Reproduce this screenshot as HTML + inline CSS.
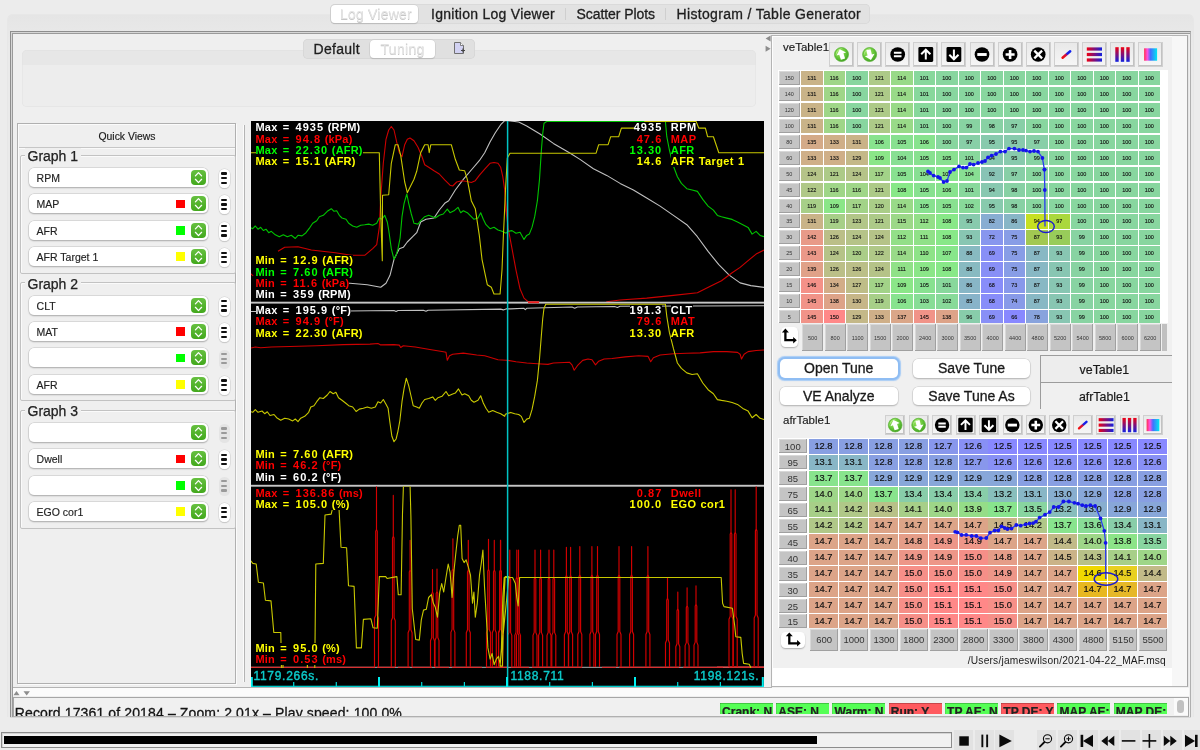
<!DOCTYPE html><html><head><meta charset="utf-8"><title>Log Viewer</title><style>

html,body{margin:0;padding:0}
body{width:1200px;height:750px;overflow:hidden;background:#ececec;font-family:"Liberation Sans",sans-serif;position:relative;color:#222}
.a{position:absolute}
.t{position:absolute;white-space:nowrap;line-height:1}
.gl{position:absolute;white-space:nowrap;font-weight:bold;font-size:11px;line-height:11px;background:#000;letter-spacing:.36px;word-spacing:2px}
.gl i{font-style:normal;letter-spacing:1.05px;margin-left:1px;margin-right:-1.7px}
.combo{position:absolute;left:29px;width:179px;height:19px;background:#fff;border-radius:5px;box-shadow:0 0 0 0.5px #c4c4c4,0 1px 1.5px rgba(0,0,0,.35)}
.combo span{-webkit-text-stroke:.15px #222;position:absolute;left:7.6px;top:4.2px;font-size:10.5px;line-height:12px;color:#222}
.gb{position:absolute;left:162px;top:2px;width:15.2px;height:15.2px;border-radius:4px;background:linear-gradient(#66c040,#42a81c)}
.sw{position:absolute;left:147.2px;top:5.5px;width:8.7px;height:8.5px}
.hd{position:absolute;left:219px;width:10.5px;height:19px;background:#fff;border-radius:5.2px;box-shadow:0 0 0 0.5px #d0d0d0,0 1px 1px rgba(0,0,0,.2)}
.hd i{position:absolute;left:2.1px;width:6.3px;height:2.2px;background:#111;border-radius:1.1px}
.hd.dis{background:#e4e4e4;box-shadow:none}
.hd.dis i{background:#9a9a9a}
.grp{position:absolute;left:20px;width:214px;border:1px solid #c2c2c2;border-radius:2px;box-shadow:inset 1px 1px 0 #fafafa}
.grp b{-webkit-text-stroke:.25px #222;position:absolute;left:3.5px;top:-7.5px;background:#efefef;padding:0 3px;font-weight:normal;font-size:14px;line-height:16px;color:#222}
.cell{position:absolute;text-align:center;color:#111}
.hc{position:absolute;text-align:center;color:#333;background:#c4c4c4;box-shadow:inset -1px -1px 0 #a0a0a0, inset 1px 1px 0 #d8d8d8}
.tb{position:absolute;background:linear-gradient(#e8e8e8,#f7f7f7);box-shadow:inset 0 0 0 1px #d0d0d0, inset -1px -1px 0 1px #c2c2c2}
.btn{position:absolute;background:#fff;border-radius:5px;box-shadow:0 0 0 0.5px #c8c8c8,0 1px 1.5px rgba(0,0,0,.3);text-align:center;font-size:14px;color:#1a1a1a;-webkit-text-stroke:.3px #1a1a1a}
.st{position:absolute;top:703.2px;height:11.3px;width:53px;font-weight:bold;font-size:12px;line-height:15px;-webkit-text-stroke:.25px #222;color:#222;overflow:hidden;white-space:nowrap}
.st span{position:absolute;left:2.3px;top:1.6px}

</style></head><body><div id="root" style="position:absolute;left:0;top:0;width:1200px;height:750px;will-change:transform">
<div class="a" style="left:8px;top:15px;width:1185px;height:706px;border-radius:4px 4px 0 0;background:linear-gradient(#e5e5e5,#eaeaea 30px);box-shadow:0 0 0 0.5px #e2e2e2"></div>
<div class="a" style="left:330px;top:4px;width:540px;height:20px;border-radius:5px;background:#e2e2e2;box-shadow:inset 0 0 0 0.5px #d2d2d2"></div>
<div class="a" style="left:331px;top:5px;width:87px;height:18px;border-radius:4px;background:#fff;box-shadow:0 0 0 0.5px #c8c8c8,0 1px 1px rgba(0,0,0,.2)"></div>
<div class="t" id="tlv" style="left:340px;top:7px;font-size:14px;color:#e4e4e4;text-shadow:0 1px 0 #c6c6c6;letter-spacing:.2px">Log Viewer</div>
<div class="t" id="tilv" style="-webkit-text-stroke:.3px #1e1e1e;left:431px;top:7px;font-size:14px;color:#1e1e1e;letter-spacing:.27px">Ignition Log Viewer</div>
<div class="t" id="tsp" style="-webkit-text-stroke:.3px #1e1e1e;left:576.5px;top:7px;font-size:14px;color:#1e1e1e;letter-spacing:-.07px">Scatter Plots</div>
<div class="t" id="thg" style="-webkit-text-stroke:.3px #1e1e1e;left:676.5px;top:7px;font-size:14px;color:#1e1e1e;letter-spacing:.33px">Histogram / Table Generator</div>
<div class="a" style="left:565px;top:8px;width:1px;height:12px;background:#cfcfcf"></div>
<div class="a" style="left:665px;top:8px;width:1px;height:12px;background:#cfcfcf"></div>
<div class="a" style="left:10px;top:31px;width:1179.2px;height:690px;border:1px solid #8e8e8e;border-bottom:none;border-right:1.6px solid #b0b0b0;box-shadow:inset 1px 1px 0 #d6d6d6, inset 2px 2px 0 #9a9a9a;background:#efefef"></div>
<div class="a" style="left:22px;top:50px;width:734px;height:57px;border-radius:5px;background:linear-gradient(#e7e7e7 0,#e7e7e7 15px,#ededed 15px);box-shadow:inset 0 0 0 0.5px #e0e0e0"></div>
<div class="a" style="left:303px;top:38.5px;width:172px;height:20px;border-radius:5px;background:#e0e0e0;box-shadow:inset 0 0 0 0.5px #d0d0d0"></div>
<div class="a" style="left:370px;top:39.5px;width:65px;height:18px;border-radius:4px;background:#fff;box-shadow:0 0 0 0.5px #c8c8c8,0 1px 1px rgba(0,0,0,.2)"></div>
<div class="t" id="tdef" style="-webkit-text-stroke:.3px #1e1e1e;left:313.5px;top:41.5px;font-size:14px;color:#1e1e1e;letter-spacing:.3px">Default</div>
<div class="t" id="ttun" style="left:380.5px;top:41.5px;font-size:14px;color:#e4e4e4;text-shadow:0 1px 0 #c6c6c6;letter-spacing:.3px">Tuning</div>
<svg class="a" style="left:452px;top:41px" width="14" height="14" viewBox="0 0 14 14"><path d="M2.5 1.5h6l3 3v8h-9z" fill="#d2d2f2" stroke="#707070" stroke-width="1"/><path d="M8.5 1.5v3h3" fill="#fff" stroke="#666" stroke-width=".8"/><path d="M9 9.5h4M11 7.5v4" stroke="#444" stroke-width="1.2"/></svg>
<div class="a" style="left:17px;top:123px;width:217px;height:559px;border:1px solid #b0b0b0;box-shadow:inset 1px 1px 0 #fbfbfb,1px 1px 0 #fbfbfb;background:#efefef"></div>
<div class="t" id="tqv" style="-webkit-text-stroke:.15px #1a1a1a;left:98.5px;top:131.7px;font-size:10.4px;color:#1a1a1a">Quick Views</div>
<div class="a" style="left:19px;top:147px;width:216px;height:1px;background:#c6c6c6"></div>
<div class="a" style="left:19px;top:148px;width:216px;height:1px;background:#fafafa"></div>
<div class="grp" style="top:154.5px;height:117px"><b>Graph 1</b></div>
<div class="combo" style="top:167.7px"><span>RPM</span><div class="gb"><svg width="15" height="15" viewBox="0.5 0.5 15 15" style="display:block"><path d="M4.9 6.4 8 3.1l3.1 3.3M4.9 9.8l3.1 3.3 3.1-3.3" fill="none" stroke="#fff" stroke-width="1.25" stroke-linecap="round" stroke-linejoin="round"/></svg></div></div>
<div class="hd" style="top:168.9px"><i style="top:3.5px"></i><i style="top:8.1px"></i><i style="top:12.7px"></i></div>
<div class="combo" style="top:194.1px"><span>MAP</span><div class="sw" style="background:#ff0000"></div><div class="gb"><svg width="15" height="15" viewBox="0.5 0.5 15 15" style="display:block"><path d="M4.9 6.4 8 3.1l3.1 3.3M4.9 9.8l3.1 3.3 3.1-3.3" fill="none" stroke="#fff" stroke-width="1.25" stroke-linecap="round" stroke-linejoin="round"/></svg></div></div>
<div class="hd" style="top:195.3px"><i style="top:3.5px"></i><i style="top:8.1px"></i><i style="top:12.7px"></i></div>
<div class="combo" style="top:220.5px"><span>AFR</span><div class="sw" style="background:#00ff00"></div><div class="gb"><svg width="15" height="15" viewBox="0.5 0.5 15 15" style="display:block"><path d="M4.9 6.4 8 3.1l3.1 3.3M4.9 9.8l3.1 3.3 3.1-3.3" fill="none" stroke="#fff" stroke-width="1.25" stroke-linecap="round" stroke-linejoin="round"/></svg></div></div>
<div class="hd" style="top:221.7px"><i style="top:3.5px"></i><i style="top:8.1px"></i><i style="top:12.7px"></i></div>
<div class="combo" style="top:246.9px"><span>AFR Target 1</span><div class="sw" style="background:#ffff00"></div><div class="gb"><svg width="15" height="15" viewBox="0.5 0.5 15 15" style="display:block"><path d="M4.9 6.4 8 3.1l3.1 3.3M4.9 9.8l3.1 3.3 3.1-3.3" fill="none" stroke="#fff" stroke-width="1.25" stroke-linecap="round" stroke-linejoin="round"/></svg></div></div>
<div class="hd" style="top:248.1px"><i style="top:3.5px"></i><i style="top:8.1px"></i><i style="top:12.7px"></i></div>
<div class="grp" style="top:282.3px;height:117px"><b>Graph 2</b></div>
<div class="combo" style="top:295.5px"><span>CLT</span><div class="gb"><svg width="15" height="15" viewBox="0.5 0.5 15 15" style="display:block"><path d="M4.9 6.4 8 3.1l3.1 3.3M4.9 9.8l3.1 3.3 3.1-3.3" fill="none" stroke="#fff" stroke-width="1.25" stroke-linecap="round" stroke-linejoin="round"/></svg></div></div>
<div class="hd" style="top:296.7px"><i style="top:3.5px"></i><i style="top:8.1px"></i><i style="top:12.7px"></i></div>
<div class="combo" style="top:321.9px"><span>MAT</span><div class="sw" style="background:#ff0000"></div><div class="gb"><svg width="15" height="15" viewBox="0.5 0.5 15 15" style="display:block"><path d="M4.9 6.4 8 3.1l3.1 3.3M4.9 9.8l3.1 3.3 3.1-3.3" fill="none" stroke="#fff" stroke-width="1.25" stroke-linecap="round" stroke-linejoin="round"/></svg></div></div>
<div class="hd" style="top:323.1px"><i style="top:3.5px"></i><i style="top:8.1px"></i><i style="top:12.7px"></i></div>
<div class="combo" style="top:348.3px"><span></span><div class="sw" style="background:#00ff00"></div><div class="gb"><svg width="15" height="15" viewBox="0.5 0.5 15 15" style="display:block"><path d="M4.9 6.4 8 3.1l3.1 3.3M4.9 9.8l3.1 3.3 3.1-3.3" fill="none" stroke="#fff" stroke-width="1.25" stroke-linecap="round" stroke-linejoin="round"/></svg></div></div>
<div class="hd dis" style="top:349.5px"><i style="top:3.5px"></i><i style="top:8.1px"></i><i style="top:12.7px"></i></div>
<div class="combo" style="top:374.7px"><span>AFR</span><div class="sw" style="background:#ffff00"></div><div class="gb"><svg width="15" height="15" viewBox="0.5 0.5 15 15" style="display:block"><path d="M4.9 6.4 8 3.1l3.1 3.3M4.9 9.8l3.1 3.3 3.1-3.3" fill="none" stroke="#fff" stroke-width="1.25" stroke-linecap="round" stroke-linejoin="round"/></svg></div></div>
<div class="hd" style="top:375.9px"><i style="top:3.5px"></i><i style="top:8.1px"></i><i style="top:12.7px"></i></div>
<div class="grp" style="top:409.5px;height:117px"><b>Graph 3</b></div>
<div class="combo" style="top:422.7px"><span></span><div class="gb"><svg width="15" height="15" viewBox="0.5 0.5 15 15" style="display:block"><path d="M4.9 6.4 8 3.1l3.1 3.3M4.9 9.8l3.1 3.3 3.1-3.3" fill="none" stroke="#fff" stroke-width="1.25" stroke-linecap="round" stroke-linejoin="round"/></svg></div></div>
<div class="hd dis" style="top:423.9px"><i style="top:3.5px"></i><i style="top:8.1px"></i><i style="top:12.7px"></i></div>
<div class="combo" style="top:449.1px"><span>Dwell</span><div class="sw" style="background:#ff0000"></div><div class="gb"><svg width="15" height="15" viewBox="0.5 0.5 15 15" style="display:block"><path d="M4.9 6.4 8 3.1l3.1 3.3M4.9 9.8l3.1 3.3 3.1-3.3" fill="none" stroke="#fff" stroke-width="1.25" stroke-linecap="round" stroke-linejoin="round"/></svg></div></div>
<div class="hd" style="top:450.3px"><i style="top:3.5px"></i><i style="top:8.1px"></i><i style="top:12.7px"></i></div>
<div class="combo" style="top:475.5px"><span></span><div class="sw" style="background:#00ff00"></div><div class="gb"><svg width="15" height="15" viewBox="0.5 0.5 15 15" style="display:block"><path d="M4.9 6.4 8 3.1l3.1 3.3M4.9 9.8l3.1 3.3 3.1-3.3" fill="none" stroke="#fff" stroke-width="1.25" stroke-linecap="round" stroke-linejoin="round"/></svg></div></div>
<div class="hd dis" style="top:476.7px"><i style="top:3.5px"></i><i style="top:8.1px"></i><i style="top:12.7px"></i></div>
<div class="combo" style="top:501.9px"><span>EGO cor1</span><div class="sw" style="background:#ffff00"></div><div class="gb"><svg width="15" height="15" viewBox="0.5 0.5 15 15" style="display:block"><path d="M4.9 6.4 8 3.1l3.1 3.3M4.9 9.8l3.1 3.3 3.1-3.3" fill="none" stroke="#fff" stroke-width="1.25" stroke-linecap="round" stroke-linejoin="round"/></svg></div></div>
<div class="hd" style="top:503.1px"><i style="top:3.5px"></i><i style="top:8.1px"></i><i style="top:12.7px"></i></div>
<div class="a" style="left:243px;top:125px;width:1px;height:557px;background:#fbfbfb"></div>
<div class="a" style="left:244px;top:125px;width:1px;height:557px;background:#b4b4b4"></div>
<div class="a" id="graph" style="left:251px;top:120.8px;width:512.8px;height:566.4px;background:#000;overflow:hidden">
<svg class="a" style="left:0;top:0.2px" width="513" height="566" viewBox="251 121 513 566" fill="none" stroke-linejoin="round" stroke-linecap="butt">
<clipPath id="c1"><rect x="251" y="121" width="513" height="181.5"/></clipPath><clipPath id="c2"><rect x="251" y="303.5" width="513" height="181.5"/></clipPath><clipPath id="c3"><rect x="251" y="486.5" width="513" height="181.5"/></clipPath>
<g clip-path="url(#c1)">
<polyline points="258.0,280.9 350.0,283.3 367.3,284.7 380.7,287.3 386.0,283.3 390.0,275.3 394.0,259.3 399.3,248.7 403.3,247.3 407.3,242.0 412.7,236.7 416.7,232.7 420.7,222.0 426.0,219.3 434.0,218.0 439.3,210.0 444.7,203.3 448.7,200.7 455.3,190.0 463.3,179.3 471.3,170.0 479.3,160.7 484.7,152.7 490.0,142.0 495.3,132.7 500.7,124.7 504.7,120.7 508.0,120.7 518.7,122.0 526.7,126.0 540.0,134.0 553.4,143.4 569.4,152.7 580.0,159.4 593.4,168.7 606.7,175.4 620.1,183.4 633.4,190.0 646.7,198.0 660.1,206.1 673.4,215.4 686.8,224.7 697.4,236.7 708.1,251.4 718.8,264.7 729.5,275.4 740.1,282.9 750.8,285.6 764.1,287.4" stroke="#c0c0c0" stroke-width="1.1" />
<polyline points="250.0,273.2 253.2,275.9" stroke="#cc0000" stroke-width="1.1" />
<polyline points="278.0,251.3 284.7,247.3 298.0,246.8 311.3,250.0 335.3,252.7 351.3,255.3 364.7,255.3 372.7,248.7 376.7,244.7 379.3,227.3 380.7,198.0 383.3,163.3 386.0,139.3 388.7,130.0 391.3,126.5 394.0,130.0 396.7,142.0 399.3,152.7 402.0,156.7 404.7,144.7 407.3,139.3 410.0,138.0 414.0,140.7 418.0,147.3 422.0,156.7 424.7,164.7 428.7,167.3 434.0,170.8 439.3,174.0 444.7,179.9 450.0,185.2 452.7,186.0 456.7,182.0 462.0,180.7 467.3,181.5 471.3,182.5 475.3,180.7 479.3,175.3 484.7,169.2 490.0,163.3 494.0,162.5 498.0,163.3 500.7,167.3 502.8,176.7 504.7,190.0 506.0,211.3 508.1,227.3 505.3,198.0 508.0,227.4 512.0,248.7 516.0,270.1 520.0,288.8 524.0,298.1 528.0,301.6 538.7,301.6 539.0,304.8 606.5,304.8 606.7,301.8 620.1,300.0 646.7,298.1 673.4,295.4 697.4,292.8 710.8,286.1 721.5,280.8 732.1,272.8 740.1,267.4 748.1,260.7 756.1,254.1 764.1,250.1" stroke="#cc0000" stroke-width="1.1" />
<polyline points="250.0,227.3 252.7,228.7 255.3,226.0 258.0,229.2 260.7,227.3 263.3,230.5 266.0,229.2 268.7,232.7 271.3,231.3 275.3,234.8 279.3,236.7 283.3,234.8 287.3,236.7 291.3,235.3 295.3,238.5 298.0,235.3 302.0,235.9 306.0,232.7 310.0,227.3 312.7,223.3 316.7,220.7 319.3,216.7 323.3,215.3 327.3,211.3 331.3,208.7 334.0,211.3 336.7,210.8 339.3,215.3 342.0,218.0 346.0,219.3 348.7,223.3 352.7,226.0 356.7,227.3 360.7,225.2 364.7,224.7 368.7,224.1 372.7,225.2 376.7,223.3 379.3,218.0 382.0,219.3 384.7,215.3 387.3,222.0 388.7,230.0 391.3,248.7 394.0,259.3 396.1,255.3 398.0,248.7 400.1,238.0 402.0,216.7 404.1,203.3 406.8,194.0 408.7,203.3 411.3,214.0 414.0,223.3 418.0,224.1 420.7,220.7 424.7,216.7 428.7,215.3 432.7,216.7 435.3,218.0 439.3,215.3 443.3,214.0 447.3,209.2 450.0,212.7 454.0,210.8 458.0,207.3 460.7,212.7 463.3,210.8 467.3,212.7 471.3,216.7 474.0,219.3 478.0,218.0 480.7,212.7 483.3,219.3 486.0,224.7 490.0,228.7 494.0,227.3 498.0,230.0 502.0,231.3 506.0,233.2 508.0,231.4 512.0,230.6 516.0,233.3 520.0,232.2 524.0,239.4 526.7,235.4 529.3,234.1 532.0,227.4 534.7,216.7 537.4,200.7 539.5,179.4 541.4,150.0 542.7,134.0 544.0,123.3 546.7,121.5 665.4,121.5 666.8,136.7 669.4,150.0 673.4,166.0 677.4,176.7 681.4,183.4 686.8,188.7 692.1,190.0 697.4,191.4 702.8,199.4 708.1,206.1 713.4,210.1 717.4,215.4 721.5,216.7 726.8,218.1 732.1,219.4 737.5,222.1 742.8,224.7 748.1,227.4 752.1,234.1 756.1,231.4 760.1,235.4 764.1,236.7" stroke="#00c400" stroke-width="1.1" />
<polyline points="250.0,152.7 379.3,152.7 380.4,200.7 381.5,238.0 382.3,260.7 382.5,195.3 388.7,194.8 391.3,163.3 395.3,144.7 398.0,144.7 400.7,155.3 404.7,182.0 407.3,192.7 410.0,187.3 414.0,179.3 416.7,171.3 420.7,152.7 424.7,144.7 428.1,144.7 429.2,152.7 430.8,144.7 451.3,144.7 455.3,159.3 459.3,170.0 464.7,170.8 467.3,179.3 471.3,200.7 475.3,208.7 479.3,235.3 482.0,259.3 487.3,284.7 491.3,287.3 494.0,294.0 500.1,294.0 502.0,270.0 503.3,238.0 505.5,190.0 507.3,158.0 510.0,153.2 510.7,153.2 596.1,153.2 598.7,144.7 608.1,144.7 610.7,136.7 618.7,136.7 621.4,128.1 643.0,128.1 644.9,121.5 696.1,121.5 698.8,128.1 705.4,128.1 707.6,136.7 713.4,136.7 716.1,144.7 718.8,152.7 764.1,152.7" stroke="#c8c800" stroke-width="1.1" />
</g>
<rect x="251" y="301.7" width="513" height="1.9" fill="#c6c6c6" stroke="none"/>
<line x1="528" y1="302.5" x2="539" y2="302.5" stroke="#ee2020" stroke-width="1.4"/>
<g clip-path="url(#c2)">
<polyline points="250.0,311.5 347.3,311.0 394.0,310.5 396.1,311.5 398.0,310.5 423.3,310.2 426.0,311.3 428.1,310.2 500.7,309.1 503.3,309.9 506.0,308.9 510.7,308.9 524.0,308.3 525.3,309.7 526.7,308.3 572.0,307.0 574.7,308.3 577.4,307.0 614.7,306.5 617.4,307.5 620.1,306.2 764.1,305.7" stroke="#c0c0c0" stroke-width="1.1" />
<polyline points="250.0,348.3 255.3,347.0 260.7,347.8 271.3,347.0 290.0,346.5 316.7,345.7 343.3,344.6 370.0,344.1 378.0,343.5 380.7,344.9 394.0,344.6 399.3,345.1 400.7,347.5 403.3,345.7 415.3,347.0 431.3,349.7 442.0,351.5 446.0,352.3 447.3,360.3 449.5,355.8 452.7,354.2 463.3,353.1 476.7,355.0 484.7,355.8 498.0,359.8 506.0,360.3 508.0,360.4 516.0,361.7 526.7,363.0 537.4,363.8 548.0,364.4 553.4,363.0 569.4,362.2 572.0,364.9 574.2,370.2 577.4,365.7 582.7,360.4 588.0,359.0 592.0,359.8 595.5,364.9 598.7,361.2 604.1,359.0 612.1,358.5 625.4,356.9 638.7,355.8 648.1,356.4 650.7,361.7 653.4,357.7 660.1,355.0 673.4,353.7 686.8,353.2 700.1,352.9 713.4,351.6 726.8,351.6 737.5,352.4 740.1,354.2 741.5,359.0 744.1,354.2 748.1,351.6 756.1,350.5 764.1,350.0" stroke="#cc0000" stroke-width="1.1" />
<polyline points="250.0,411.5 252.7,412.3 255.3,409.7 258.0,412.3 262.0,411.0 264.7,413.7 267.3,411.8 270.0,415.5 274.0,414.5 276.7,417.7 280.7,420.3 284.7,418.2 288.7,419.0 292.7,420.9 295.3,419.0 298.0,421.7 300.7,418.2 304.7,416.3 308.7,412.3 310.8,407.0 314.0,405.7 316.7,401.7 319.9,397.7 323.3,398.5 327.3,395.0 330.0,391.5 333.2,393.7 335.9,392.3 338.5,397.7 342.0,400.3 345.5,403.0 348.7,405.7 352.7,407.0 356.1,411.5 359.3,409.1 363.3,408.3 367.3,407.0 371.3,408.3 375.3,407.0 378.0,401.7 380.7,403.0 383.3,399.5 386.0,404.3 388.1,408.3 390.0,423.0 391.9,436.3 394.0,441.7 396.1,439.0 398.0,431.0 399.9,420.3 402.0,401.7 404.1,388.3 406.3,378.2 408.7,385.7 410.8,395.0 413.2,405.7 416.7,407.0 419.3,408.3 422.0,403.0 424.7,399.5 428.7,398.5 432.7,396.9 435.3,400.3 438.0,397.7 442.0,396.3 446.0,391.5 448.7,395.8 452.1,394.2 455.3,393.1 458.5,388.9 462.0,395.0 464.7,393.7 468.7,395.8 471.3,400.3 474.0,402.2 478.0,400.3 480.7,395.8 483.3,403.0 486.0,408.3 488.7,412.3 492.7,410.5 496.7,412.3 500.7,413.7 504.7,416.3 505.3,414.3 510.7,412.4 514.7,413.7 518.7,414.5 521.3,416.4 524.0,422.5 526.7,419.1 529.3,418.3 532.0,409.7 534.7,396.4 537.4,380.4 539.5,359.0 541.4,335.0 542.7,319.0 544.0,308.3 545.9,304.1 665.4,304.1 666.8,316.3 669.4,332.4 673.4,348.4 677.4,363.0 681.4,368.4 686.8,372.9 692.1,374.5 697.4,373.7 702.8,383.0 708.1,389.7 713.4,393.7 717.4,399.6 721.5,400.4 726.8,401.2 732.1,402.5 737.5,404.4 742.8,408.4 748.1,411.1 752.1,417.7 756.1,414.5 760.1,418.3 764.1,419.6" stroke="#c8c800" stroke-width="1.1" />
</g>
<rect x="251" y="484.8" width="513" height="1.9" fill="#c6c6c6" stroke="none"/>
<line x1="251" y1="667.3" x2="764" y2="667.3" stroke="#8c8c8c" stroke-width="1.2"/>
<line x1="717" y1="667.1" x2="764" y2="667.1" stroke="#f04040" stroke-width="1.4"/>
<g clip-path="url(#c3)">
<line x1="251" y1="667.3" x2="764" y2="667.3" stroke="#d83030" stroke-width="1.2" stroke-dasharray="124 2 18 3 12 2 20 3 14 3 30 4 22 3 18 3 50 20 14 3 60 4 40 6 50 3 100"/>
<polyline points="374.5,667.0 374.5,618.2 375.7,615.2 375.7,531.4 376.5,529.4 376.5,486.2 376.5,529.4 377.3,531.4 377.3,615.2 378.5,618.2 378.5,667.0" stroke="#d40000" stroke-width="1.15" />
<polyline points="391.3,667.0 391.3,620.7 392.5,617.7 392.5,538.3 393.3,536.3 393.3,495.4 393.3,536.3 394.1,538.3 394.1,617.7 395.3,620.7 395.3,667.0" stroke="#d40000" stroke-width="1.15" />
<polyline points="408.1,667.0 408.1,632.8 409.3,629.8 409.3,571.9 410.1,569.9 410.1,540.2 410.1,569.9 410.9,571.9 410.9,629.8 412.1,632.8 412.1,667.0" stroke="#d40000" stroke-width="1.15" />
<polyline points="430.5,667.0 430.5,640.7 431.7,637.7 431.7,593.9 432.5,591.9 432.5,569.6 432.5,591.9 433.3,593.9 433.3,637.7 434.5,640.7 434.5,667.0" stroke="#d40000" stroke-width="1.15" />
<polyline points="435.0,667.0 435.0,640.5 436.2,637.5 436.2,593.5 437.0,591.5 437.0,569.0 437.0,591.5 437.8,593.5 437.8,637.5 439.0,640.5 439.0,667.0" stroke="#d40000" stroke-width="1.15" />
<polyline points="450.9,667.0 450.9,632.4 452.1,629.4 452.1,570.8 452.9,568.8 452.9,538.8 452.9,568.8 453.7,570.8 453.7,629.4 454.9,632.4 454.9,667.0" stroke="#d40000" stroke-width="1.15" />
<polyline points="466.3,667.0 466.3,632.8 467.5,629.8 467.5,571.9 468.3,569.9 468.3,540.2 468.3,569.9 469.1,571.9 469.1,629.8 470.3,632.8 470.3,667.0" stroke="#d40000" stroke-width="1.15" />
<polyline points="486.5,667.0 486.5,632.5 487.7,629.5 487.7,571.3 488.5,569.3 488.5,539.3 488.5,569.3 489.3,571.3 489.3,629.5 490.5,632.5 490.5,667.0" stroke="#d40000" stroke-width="1.15" />
<polyline points="492.3,667.0 492.3,632.8 493.5,629.8 493.5,571.9 494.3,569.9 494.3,540.2 494.3,569.9 495.1,571.9 495.1,629.8 496.3,632.8 496.3,667.0" stroke="#d40000" stroke-width="1.15" />
<polyline points="498.5,667.0 498.5,632.8 499.7,629.8 499.7,571.9 500.5,569.9 500.5,540.2 500.5,569.9 501.3,571.9 501.3,629.8 502.5,632.8 502.5,667.0" stroke="#d40000" stroke-width="1.15" />
<polyline points="498.6,667.0 498.6,632.8 499.8,629.8 499.8,571.9 500.6,569.9 500.6,540.2 500.6,569.9 501.4,571.9 501.4,629.8 502.6,632.8 502.6,667.0" stroke="#d40000" stroke-width="1.15" />
<polyline points="507.8,667.0 507.8,635.4 509.0,632.4 509.0,579.3 509.8,577.3 509.8,550.0 509.8,577.3 510.6,579.3 510.6,632.4 511.8,635.4 511.8,667.0" stroke="#d40000" stroke-width="1.15" />
<polyline points="514.8,667.0 514.8,635.4 516.0,632.4 516.0,579.3 516.8,577.3 516.8,550.0 516.8,577.3 517.6,579.3 517.6,632.4 518.8,635.4 518.8,667.0" stroke="#d40000" stroke-width="1.15" />
<polyline points="516.5,667.0 516.5,635.4 517.7,632.4 517.7,579.3 518.5,577.3 518.5,550.0 518.5,577.3 519.3,579.3 519.3,632.4 520.5,635.4 520.5,667.0" stroke="#d40000" stroke-width="1.15" />
<polyline points="533.0,667.0 533.0,635.4 534.2,632.4 534.2,579.3 535.0,577.3 535.0,550.0 535.0,577.3 535.8,579.3 535.8,632.4 537.0,635.4 537.0,667.0" stroke="#d40000" stroke-width="1.15" />
<polyline points="538.6,667.0 538.6,635.4 539.8,632.4 539.8,579.3 540.6,577.3 540.6,550.0 540.6,577.3 541.4,579.3 541.4,632.4 542.6,635.4 542.6,667.0" stroke="#d40000" stroke-width="1.15" />
<polyline points="547.0,667.0 547.0,635.4 548.2,632.4 548.2,579.3 549.0,577.3 549.0,550.0 549.0,577.3 549.8,579.3 549.8,632.4 551.0,635.4 551.0,667.0" stroke="#d40000" stroke-width="1.15" />
<polyline points="551.8,667.0 551.8,635.4 553.0,632.4 553.0,579.3 553.8,577.3 553.8,550.0 553.8,577.3 554.6,579.3 554.6,632.4 555.8,635.4 555.8,667.0" stroke="#d40000" stroke-width="1.15" />
<polyline points="564.4,667.0 564.4,634.7 565.6,631.7 565.6,577.2 566.4,575.2 566.4,547.2 566.4,575.2 567.2,577.2 567.2,631.7 568.4,634.7 568.4,667.0" stroke="#d40000" stroke-width="1.15" />
<polyline points="568.6,667.0 568.6,634.7 569.8,631.7 569.8,577.2 570.6,575.2 570.6,547.2 570.6,575.2 571.4,577.2 571.4,631.7 572.6,634.7 572.6,667.0" stroke="#d40000" stroke-width="1.15" />
<polyline points="577.8,667.0 577.8,634.5 579.0,631.5 579.0,576.7 579.8,574.7 579.8,546.6 579.8,574.7 580.6,576.7 580.6,631.5 581.8,634.5 581.8,667.0" stroke="#d40000" stroke-width="1.15" />
<polyline points="589.9,667.0 589.9,634.5 591.1,631.5 591.1,576.7 591.9,574.7 591.9,546.6 591.9,574.7 592.7,576.7 592.7,631.5 593.9,634.5 593.9,667.0" stroke="#d40000" stroke-width="1.15" />
<polyline points="595.5,667.0 595.5,634.5 596.7,631.5 596.7,576.7 597.5,574.7 597.5,546.6 597.5,574.7 598.3,576.7 598.3,631.5 599.5,634.5 599.5,667.0" stroke="#d40000" stroke-width="1.15" />
<polyline points="617.0,667.0 617.0,634.5 618.2,631.5 618.2,576.7 619.0,574.7 619.0,546.6 619.0,574.7 619.8,576.7 619.8,631.5 621.0,634.5 621.0,667.0" stroke="#d40000" stroke-width="1.15" />
<polyline points="629.6,667.0 629.6,634.5 630.8,631.5 630.8,576.7 631.6,574.7 631.6,546.6 631.6,574.7 632.4,576.7 632.4,631.5 633.6,634.5 633.6,667.0" stroke="#d40000" stroke-width="1.15" />
<polyline points="645.9,667.0 645.9,634.5 647.1,631.5 647.1,576.7 647.9,574.7 647.9,546.6 647.9,574.7 648.7,576.7 648.7,631.5 649.9,634.5 649.9,667.0" stroke="#d40000" stroke-width="1.15" />
<polyline points="665.5,667.0 665.5,643.0 666.7,640.0 666.7,600.3 667.5,598.3 667.5,578.0 667.5,598.3 668.3,600.3 668.3,640.0 669.5,643.0 669.5,667.0" stroke="#d40000" stroke-width="1.15" />
<polyline points="675.8,667.0 675.8,646.8 677.0,643.8 677.0,610.8 677.8,608.8 677.8,592.0 677.8,608.8 678.6,610.8 678.6,643.8 679.8,646.8 679.8,667.0" stroke="#d40000" stroke-width="1.15" />
<polyline points="685.1,667.0 685.1,645.6 686.3,642.6 686.3,607.6 687.1,605.6 687.1,587.8 687.1,605.6 687.9,607.6 687.9,642.6 689.1,645.6 689.1,667.0" stroke="#d40000" stroke-width="1.15" />
<polyline points="694.0,667.0 694.0,645.1 695.2,642.1 695.2,606.1 696.0,604.1 696.0,585.9 696.0,604.1 696.8,606.1 696.8,642.1 698.0,645.1 698.0,667.0" stroke="#d40000" stroke-width="1.15" />
<polyline points="729.0,667.0 729.0,619.2 730.2,616.2 730.2,534.1 731.0,532.1 731.0,489.8 731.0,532.1 731.8,534.1 731.8,616.2 733.0,619.2 733.0,667.0" stroke="#d40000" stroke-width="1.15" />
<polyline points="733.2,667.0 733.2,619.2 734.4,616.2 734.4,534.1 735.2,532.1 735.2,489.8 735.2,532.1 736.0,534.1 736.0,616.2 737.2,619.2 737.2,667.0" stroke="#d40000" stroke-width="1.15" />
<polyline points="754.2,667.0 754.2,618.0 755.4,615.0 755.4,531.0 756.2,529.0 756.2,485.6 756.2,529.0 757.0,531.0 757.0,615.0 758.2,618.0 758.2,667.0" stroke="#d40000" stroke-width="1.15" />
<polyline points="250.0,559.8 252.8,563.4 256.2,564.0 258.4,582.2 263.4,583.0 265.4,600.3 271.0,600.9 273.8,632.5 280.8,632.5 281.6,675.9 314.7,675.9 315.8,564.0 323.3,563.4 325.0,515.0 331.2,514.1 332.6,508.0 339.0,508.0 341.0,547.2 346.6,547.7 348.5,585.8 354.1,586.4 356.4,647.9 361.4,647.9 363.4,619.4 370.9,618.8 373.1,627.8 377.3,628.3 379.3,576.6 385.7,576.6 387.1,578.5 392.7,577.4 396.9,576.6 398.3,594.7 401.1,594.7 402.5,513.6 403.4,486.2 410.1,486.2 410.9,516.4 412.3,608.7 415.7,639.5 419.3,640.1 421.3,619.9 423.5,610.1 426.3,609.3 428.6,597.5 431.4,594.7 433.3,603.1 435.3,607.3 437.5,617.1 439.8,592.0 441.7,583.6 443.7,592.0 445.9,578.0 448.2,564.0 450.1,572.4 452.1,597.5 453.8,572.4 455.7,554.2 457.7,536.0 459.3,525.3 460.7,525.3 462.1,558.4 464.1,562.6 466.1,559.8 468.3,566.8 470.5,575.2 472.5,603.1 473.9,592.0 475.3,617.1 477.3,603.1 479.5,575.2 481.2,564.0 482.9,550.0 484.5,586.4 486.5,619.9 487.9,647.9 490.1,659.1 492.1,653.5 494.1,664.7 496.3,659.1 498.5,656.3 500.5,666.1 502.4,666.1 504.1,597.5 505.2,576.6 508.9,576.6 500.0,666.2 501.4,648.0 502.8,597.6 504.2,577.5 512.6,577.5 515.4,583.6 516.8,597.6 518.2,606.0 519.6,577.5 721.2,577.5 722.6,603.2 724.0,606.6 732.4,608.3 734.7,625.6 735.8,636.8 740.8,637.4 742.2,653.6 743.6,663.4 749.2,664.3 750.6,667.1 751.2,676.0" stroke="#c8c800" stroke-width="1.1" />
<path d="M283 664v4M307.4 664v4" stroke="#d0c000" stroke-width="1.2"/>
</g>
<line x1="507.6" y1="121" x2="507.6" y2="687" stroke="#00c4c4" stroke-width="1.5"/>
<rect x="251" y="685.7" width="513" height="1.6" fill="#00c8c8" stroke="none"/>
<line x1="251.8" y1="677" x2="251.8" y2="687" stroke="#00f0f0" stroke-width="2"/>
<line x1="293.7" y1="682" x2="293.7" y2="687" stroke="#00d8d8" stroke-width="1.2"/>
<line x1="336.3" y1="682" x2="336.3" y2="687" stroke="#00d8d8" stroke-width="1.2"/>
<line x1="379.0" y1="677" x2="379.0" y2="687" stroke="#00f0f0" stroke-width="2"/>
<line x1="421.7" y1="682" x2="421.7" y2="687" stroke="#00d8d8" stroke-width="1.2"/>
<line x1="464.4" y1="682" x2="464.4" y2="687" stroke="#00d8d8" stroke-width="1.2"/>
<line x1="507.0" y1="677" x2="507.0" y2="687" stroke="#00f0f0" stroke-width="2"/>
<line x1="549.7" y1="682" x2="549.7" y2="687" stroke="#00d8d8" stroke-width="1.2"/>
<line x1="592.4" y1="682" x2="592.4" y2="687" stroke="#00d8d8" stroke-width="1.2"/>
<line x1="635.0" y1="677" x2="635.0" y2="687" stroke="#00f0f0" stroke-width="2"/>
<line x1="677.7" y1="682" x2="677.7" y2="687" stroke="#00d8d8" stroke-width="1.2"/>
<line x1="720.4" y1="682" x2="720.4" y2="687" stroke="#00d8d8" stroke-width="1.2"/>
<line x1="762.8" y1="677" x2="762.8" y2="687" stroke="#00f0f0" stroke-width="2"/>
</svg>
<div class="gl" id="gl1" style="left:4.5px;top:1.6px;color:#ffffff;letter-spacing:.18px">Max = <i>4935</i> (RPM)</div>
<div class="gl" style="left:4.5px;top:12.9px;color:#ff0000;letter-spacing:.18px">Max = <i>94.8</i> (kPa)</div>
<div class="gl" style="left:4.5px;top:24.2px;color:#00ff00;letter-spacing:.18px">Max = <i>22.30</i> (AFR)</div>
<div class="gl" style="left:4.5px;top:35.6px;color:#ffff00;letter-spacing:.18px">Max = <i>15.1</i> (AFR)</div>
<div class="gl" style="left:4.5px;top:134.6px;color:#ffff00;letter-spacing:.18px">Min = <i>12.9</i> (AFR)</div>
<div class="gl" style="left:4.5px;top:145.9px;color:#00ff00;letter-spacing:.18px">Min = <i>7.60</i> (AFR)</div>
<div class="gl" style="left:4.5px;top:156.9px;color:#ff0000;letter-spacing:.18px">Min = <i>11.6</i> (kPa)</div>
<div class="gl" style="left:4.5px;top:168.1px;color:#ffffff;letter-spacing:.18px">Min = <i>359</i> (RPM)</div>
<div class="gl" style="right:101.5px;top:1.6px;color:#ffffff;letter-spacing:1.05px">4935</div>
<div class="gl" style="left:419.8px;top:1.6px;color:#ffffff;word-spacing:.6px;letter-spacing:.4px">RPM</div>
<div class="gl" style="right:101.5px;top:12.9px;color:#ff0000;letter-spacing:1.05px">47.6</div>
<div class="gl" style="left:419.8px;top:12.9px;color:#ff0000;word-spacing:.6px;letter-spacing:.4px">MAP</div>
<div class="gl" style="right:101.5px;top:24.2px;color:#00ff00;letter-spacing:1.05px">13.30</div>
<div class="gl" style="left:419.8px;top:24.2px;color:#00ff00;word-spacing:.6px;letter-spacing:.4px">AFR</div>
<div class="gl" style="right:101.5px;top:35.6px;color:#ffff00;letter-spacing:1.05px">14.6</div>
<div class="gl" id="gl2" style="left:419.8px;top:35.6px;color:#ffff00;word-spacing:.6px;letter-spacing:.4px">AFR Target 1</div>
<div class="gl" style="left:4.5px;top:184.3px;color:#ffffff;letter-spacing:.18px">Max = <i>195.9</i> (°F)</div>
<div class="gl" style="left:4.5px;top:195.6px;color:#ff0000;letter-spacing:.18px">Max = <i>94.9</i> (°F)</div>
<div class="gl" style="left:4.5px;top:206.9px;color:#ffff00;letter-spacing:.18px">Max = <i>22.30</i> (AFR)</div>
<div class="gl" style="left:4.5px;top:328.3px;color:#ffff00;letter-spacing:.18px">Min = <i>7.60</i> (AFR)</div>
<div class="gl" style="left:4.5px;top:339.6px;color:#ff0000;letter-spacing:.18px">Min = <i>46.2</i> (°F)</div>
<div class="gl" style="left:4.5px;top:351.1px;color:#ffffff;letter-spacing:.18px">Min = <i>60.2</i> (°F)</div>
<div class="gl" style="right:101.5px;top:184.3px;color:#ffffff;letter-spacing:1.05px">191.3</div>
<div class="gl" style="left:419.8px;top:184.3px;color:#ffffff;word-spacing:.6px;letter-spacing:.4px">CLT</div>
<div class="gl" style="right:101.5px;top:195.6px;color:#ff0000;letter-spacing:1.05px">79.6</div>
<div class="gl" style="left:419.8px;top:195.6px;color:#ff0000;word-spacing:.6px;letter-spacing:.4px">MAT</div>
<div class="gl" style="right:101.5px;top:206.9px;color:#ffff00;letter-spacing:1.05px">13.30</div>
<div class="gl" style="left:419.8px;top:206.9px;color:#ffff00;word-spacing:.6px;letter-spacing:.4px">AFR</div>
<div class="gl" style="left:4.5px;top:367.0px;color:#ff0000;letter-spacing:.18px">Max = <i>136.86</i> (ms)</div>
<div class="gl" style="left:4.5px;top:378.6px;color:#ffff00;letter-spacing:.18px">Max = <i>105.0</i> (%)</div>
<div class="gl" style="left:4.5px;top:521.9px;color:#ffff00;letter-spacing:.18px">Min = <i>95.0</i> (%)</div>
<div class="gl" style="left:4.5px;top:533.1px;color:#ff0000;letter-spacing:.18px">Min = <i>0.53</i> (ms)</div>
<div class="gl" style="right:101.5px;top:367.0px;color:#ff0000;letter-spacing:1.05px">0.87</div>
<div class="gl" style="left:419.8px;top:367.0px;color:#ff0000;word-spacing:.6px;letter-spacing:.4px">Dwell</div>
<div class="gl" style="right:101.5px;top:378.6px;color:#ffff00;letter-spacing:1.05px">100.0</div>
<div class="gl" style="left:419.8px;top:378.6px;color:#ffff00;word-spacing:.6px;letter-spacing:.4px">EGO cor1</div>
<div class="t" id="tm1" style="left:2.5px;top:548.8px;font-size:12px;line-height:12px;color:#0ccaca;letter-spacing:.7px;-webkit-text-stroke:.4px #0ccaca">1179.266s.</div>
<div class="t" id="tm2" style="left:259.5px;top:548.8px;font-size:12px;line-height:12px;color:#0ccaca;letter-spacing:.7px;-webkit-text-stroke:.4px #0ccaca">1188.711</div>
<div class="t" id="tm3" style="right:4.5px;top:548.8px;font-size:12px;line-height:12px;color:#0ccaca;letter-spacing:.7px;-webkit-text-stroke:.4px #0ccaca">1198.121s.</div>
</div>
<div class="a" style="left:771px;top:35px;width:417px;height:652.4px;border:1px solid #b4b4b4;border-right:1px solid #a4a4a4;box-sizing:border-box;box-shadow:inset 1px 1px 0 #fdfdfd,1px 0 0 #e6e6e6;background:#fff"></div>
<div class="a" style="left:1171.5px;top:36px;width:15.5px;height:650px;background:#f7f7f7"></div>
<div class="a" style="left:773px;top:37px;width:398.5px;height:631.4px;background:#f0f0f0"></div>
<svg class="a" style="left:764px;top:35px" width="8" height="18" viewBox="0 0 8 18"><path d="M6.6 0.6v6L1.6 3.6zM1.6 10.8v6L6.6 13.8z" fill="#8c8c8c"/></svg>
<div class="t" id="tve" style="left:783px;top:41.6px;font-size:11.5px;color:#1a1a1a;-webkit-text-stroke:.15px #1a1a1a">veTable1</div>
<div class="tb" style="left:829.0px;top:42px;width:25px;height:25px"></div>
<div class="tb" style="left:857.1px;top:42px;width:25px;height:25px"></div>
<div class="tb" style="left:885.2px;top:42px;width:25px;height:25px"></div>
<div class="tb" style="left:913.3px;top:42px;width:25px;height:25px"></div>
<div class="tb" style="left:941.4px;top:42px;width:25px;height:25px"></div>
<div class="tb" style="left:969.5px;top:42px;width:25px;height:25px"></div>
<div class="tb" style="left:997.6px;top:42px;width:25px;height:25px"></div>
<div class="tb" style="left:1025.7px;top:42px;width:25px;height:25px"></div>
<div class="tb" style="left:1053.8px;top:42px;width:25px;height:25px"></div>
<div class="tb" style="left:1081.9px;top:42px;width:25px;height:25px"></div>
<div class="tb" style="left:1110.0px;top:42px;width:25px;height:25px"></div>
<div class="tb" style="left:1138.1px;top:42px;width:25px;height:25px"></div>
<svg class="a" style="left:829px;top:42px" width="335" height="25" viewBox="0 0 335 25">
<defs><radialGradient id="gg" cx=".4" cy=".35" r=".7"><stop offset="0" stop-color="#a6ec6a"/><stop offset=".6" stop-color="#62c436"/><stop offset="1" stop-color="#3f9c22"/></radialGradient><linearGradient id="gd" x1="0" y1="1" x2="1" y2="0"><stop offset="0" stop-color="#f01010"/><stop offset=".45" stop-color="#d01040"/><stop offset=".6" stop-color="#2020e0"/><stop offset="1" stop-color="#1020f0"/></linearGradient><linearGradient id="gh" x1="0" y1="0" x2="1" y2="0"><stop offset="0" stop-color="#f00010"/><stop offset="1" stop-color="#1020e0"/></linearGradient><linearGradient id="gv" x1="0" y1="0" x2="0" y2="1"><stop offset="0" stop-color="#f00010"/><stop offset="1" stop-color="#1020e0"/></linearGradient><linearGradient id="gr" x1="0" y1="0" x2="1" y2="0"><stop offset="0" stop-color="#ff3050"/><stop offset=".25" stop-color="#ff50e0"/><stop offset=".5" stop-color="#4070ff"/><stop offset="1" stop-color="#00e8f0"/></linearGradient></defs>
<circle cx="12.5" cy="12.5" r="7.0" fill="url(#gg)" stroke="#55b030" stroke-width="0.7"/><path d="M6.9 14.0A6.2 6.2 0 0 1 14.0 6.6A7.6 7.6 0 0 0 6.9 14.0Z" fill="#c4f59a" opacity=".8"/><path d="M0 -5.6L5.0 -0.5H2.2V4.9H-2.2V-0.5H-5.0Z" fill="#fff" transform="translate(12.5 12.5) rotate(-18)"/>
<circle cx="40.6" cy="12.5" r="7.0" fill="url(#gg)" stroke="#55b030" stroke-width="0.7"/><path d="M35.0 14.0A6.2 6.2 0 0 1 42.1 6.6A7.6 7.6 0 0 0 35.0 14.0Z" fill="#c4f59a" opacity=".8"/><path d="M0 -5.6L5.0 -0.5H2.2V4.9H-2.2V-0.5H-5.0Z" fill="#fff" transform="translate(40.6 12.5) rotate(180) rotate(-14)"/>
<circle cx="68.7" cy="12.5" r="7.35" fill="#000"/><path d="M64.9 10.8h7.6M64.9 14.2h7.6" stroke="#fff" stroke-width="2.0"/>
<rect x="89.39999999999999" y="5.1" width="14.8" height="14.8" rx="1.3" fill="#000"/><path d="M96.8 17.5V8.3M92.2 12.3L96.8 7.7L101.39999999999999 12.3" stroke="#fff" stroke-width="2.0" fill="none"/>
<rect x="117.5" y="5.1" width="14.8" height="14.8" rx="1.3" fill="#000"/><path d="M124.9 7.5V16.7M120.30000000000001 12.7L124.9 17.3L129.5 12.7" stroke="#fff" stroke-width="2.0" fill="none"/>
<circle cx="153.0" cy="12.5" r="7.35" fill="#000"/><path d="M148.3 12.5h9.4" stroke="#fff" stroke-width="2.9"/>
<circle cx="181.1" cy="12.5" r="7.35" fill="#000"/><path d="M176.6 12.5h9.0M181.1 8.0v9.0" stroke="#fff" stroke-width="2.6"/>
<circle cx="209.2" cy="12.5" r="7.35" fill="#000"/><path d="M205.29999999999998 8.6l7.8 7.8M213.1 8.6l-7.8 7.8" stroke="#fff" stroke-width="2.3"/>
<path d="M233.60000000000002 15.8L241.20000000000002 9.2" stroke="url(#gd)" stroke-width="2.5" stroke-linecap="round"/>
<rect x="257.79999999999995" y="5.4" width="15.2" height="3.2" fill="url(#gh)"/><rect x="257.79999999999995" y="10.9" width="15.2" height="3.2" fill="url(#gh)"/><rect x="257.79999999999995" y="16.4" width="15.2" height="3.2" fill="url(#gh)"/>
<rect x="286.3" y="5.2" width="3.4" height="14.6" fill="url(#gv)"/><rect x="291.8" y="5.2" width="3.4" height="14.6" fill="url(#gv)"/><rect x="297.3" y="5.2" width="3.4" height="14.6" fill="url(#gv)"/>
<rect x="315.1" y="6.3" width="13.0" height="12.4" fill="url(#gr)"/>
</svg>
<div class="a" style="left:778px;top:70px;width:390px;height:282px;background:#fff"></div>
<div class="a" style="left:773px;top:322.9px;width:399px;height:31px;background:#f0f0f0"></div>
<div class="hc" style="left:779px;top:70.90px;width:20.5px;height:14px;font-size:5.5px;line-height:14.5px">150</div>
<div class="cell" style="left:801.0px;top:70.90px;width:21.5px;height:14.6px;background:#c9b388;font-size:5.5px;line-height:14.8px;-webkit-text-stroke:.12px #111">131</div>
<div class="cell" style="left:823.5px;top:70.90px;width:21.5px;height:14.6px;background:#9fd688;font-size:5.5px;line-height:14.8px;-webkit-text-stroke:.12px #111">116</div>
<div class="cell" style="left:846.0px;top:70.90px;width:21.5px;height:14.6px;background:#88d69f;font-size:5.5px;line-height:14.8px;-webkit-text-stroke:.12px #111">100</div>
<div class="cell" style="left:868.5px;top:70.90px;width:21.5px;height:14.6px;background:#adca88;font-size:5.5px;line-height:14.8px;-webkit-text-stroke:.12px #111">121</div>
<div class="cell" style="left:891.0px;top:70.90px;width:21.5px;height:14.6px;background:#99da88;font-size:5.5px;line-height:14.8px;-webkit-text-stroke:.12px #111">114</div>
<div class="cell" style="left:913.5px;top:70.90px;width:21.5px;height:14.6px;background:#88d89c;font-size:5.5px;line-height:14.8px;-webkit-text-stroke:.12px #111">101</div>
<div class="cell" style="left:936.0px;top:70.90px;width:21.5px;height:14.6px;background:#88d69f;font-size:5.5px;line-height:14.8px;-webkit-text-stroke:.12px #111">100</div>
<div class="cell" style="left:958.5px;top:70.90px;width:21.5px;height:14.6px;background:#88d69f;font-size:5.5px;line-height:14.8px;-webkit-text-stroke:.12px #111">100</div>
<div class="cell" style="left:981.0px;top:70.90px;width:21.5px;height:14.6px;background:#88d69f;font-size:5.5px;line-height:14.8px;-webkit-text-stroke:.12px #111">100</div>
<div class="cell" style="left:1003.5px;top:70.90px;width:21.5px;height:14.6px;background:#88d69f;font-size:5.5px;line-height:14.8px;-webkit-text-stroke:.12px #111">100</div>
<div class="cell" style="left:1026.0px;top:70.90px;width:21.5px;height:14.6px;background:#88d69f;font-size:5.5px;line-height:14.8px;-webkit-text-stroke:.12px #111">100</div>
<div class="cell" style="left:1048.5px;top:70.90px;width:21.5px;height:14.6px;background:#88d69f;font-size:5.5px;line-height:14.8px;-webkit-text-stroke:.12px #111">100</div>
<div class="cell" style="left:1071.0px;top:70.90px;width:21.5px;height:14.6px;background:#88d69f;font-size:5.5px;line-height:14.8px;-webkit-text-stroke:.12px #111">100</div>
<div class="cell" style="left:1093.5px;top:70.90px;width:21.5px;height:14.6px;background:#88d69f;font-size:5.5px;line-height:14.8px;-webkit-text-stroke:.12px #111">100</div>
<div class="cell" style="left:1116.0px;top:70.90px;width:21.5px;height:14.6px;background:#88d69f;font-size:5.5px;line-height:14.8px;-webkit-text-stroke:.12px #111">100</div>
<div class="cell" style="left:1138.5px;top:70.90px;width:21.5px;height:14.6px;background:#88d69f;font-size:5.5px;line-height:14.8px;-webkit-text-stroke:.12px #111">100</div>
<div class="hc" style="left:779px;top:86.85px;width:20.5px;height:14px;font-size:5.5px;line-height:14.5px">140</div>
<div class="cell" style="left:801.0px;top:86.85px;width:21.5px;height:14.6px;background:#c9b388;font-size:5.5px;line-height:14.8px;-webkit-text-stroke:.12px #111">131</div>
<div class="cell" style="left:823.5px;top:86.85px;width:21.5px;height:14.6px;background:#9fd688;font-size:5.5px;line-height:14.8px;-webkit-text-stroke:.12px #111">116</div>
<div class="cell" style="left:846.0px;top:86.85px;width:21.5px;height:14.6px;background:#88d69f;font-size:5.5px;line-height:14.8px;-webkit-text-stroke:.12px #111">100</div>
<div class="cell" style="left:868.5px;top:86.85px;width:21.5px;height:14.6px;background:#adca88;font-size:5.5px;line-height:14.8px;-webkit-text-stroke:.12px #111">121</div>
<div class="cell" style="left:891.0px;top:86.85px;width:21.5px;height:14.6px;background:#99da88;font-size:5.5px;line-height:14.8px;-webkit-text-stroke:.12px #111">114</div>
<div class="cell" style="left:913.5px;top:86.85px;width:21.5px;height:14.6px;background:#88d89c;font-size:5.5px;line-height:14.8px;-webkit-text-stroke:.12px #111">101</div>
<div class="cell" style="left:936.0px;top:86.85px;width:21.5px;height:14.6px;background:#88d69f;font-size:5.5px;line-height:14.8px;-webkit-text-stroke:.12px #111">100</div>
<div class="cell" style="left:958.5px;top:86.85px;width:21.5px;height:14.6px;background:#88d69f;font-size:5.5px;line-height:14.8px;-webkit-text-stroke:.12px #111">100</div>
<div class="cell" style="left:981.0px;top:86.85px;width:21.5px;height:14.6px;background:#88d69f;font-size:5.5px;line-height:14.8px;-webkit-text-stroke:.12px #111">100</div>
<div class="cell" style="left:1003.5px;top:86.85px;width:21.5px;height:14.6px;background:#88d69f;font-size:5.5px;line-height:14.8px;-webkit-text-stroke:.12px #111">100</div>
<div class="cell" style="left:1026.0px;top:86.85px;width:21.5px;height:14.6px;background:#88d69f;font-size:5.5px;line-height:14.8px;-webkit-text-stroke:.12px #111">100</div>
<div class="cell" style="left:1048.5px;top:86.85px;width:21.5px;height:14.6px;background:#88d69f;font-size:5.5px;line-height:14.8px;-webkit-text-stroke:.12px #111">100</div>
<div class="cell" style="left:1071.0px;top:86.85px;width:21.5px;height:14.6px;background:#88d69f;font-size:5.5px;line-height:14.8px;-webkit-text-stroke:.12px #111">100</div>
<div class="cell" style="left:1093.5px;top:86.85px;width:21.5px;height:14.6px;background:#88d69f;font-size:5.5px;line-height:14.8px;-webkit-text-stroke:.12px #111">100</div>
<div class="cell" style="left:1116.0px;top:86.85px;width:21.5px;height:14.6px;background:#88d69f;font-size:5.5px;line-height:14.8px;-webkit-text-stroke:.12px #111">100</div>
<div class="cell" style="left:1138.5px;top:86.85px;width:21.5px;height:14.6px;background:#88d69f;font-size:5.5px;line-height:14.8px;-webkit-text-stroke:.12px #111">100</div>
<div class="hc" style="left:779px;top:102.80px;width:20.5px;height:14px;font-size:5.5px;line-height:14.5px">120</div>
<div class="cell" style="left:801.0px;top:102.80px;width:21.5px;height:14.6px;background:#c9b388;font-size:5.5px;line-height:14.8px;-webkit-text-stroke:.12px #111">131</div>
<div class="cell" style="left:823.5px;top:102.80px;width:21.5px;height:14.6px;background:#9fd688;font-size:5.5px;line-height:14.8px;-webkit-text-stroke:.12px #111">116</div>
<div class="cell" style="left:846.0px;top:102.80px;width:21.5px;height:14.6px;background:#88d69f;font-size:5.5px;line-height:14.8px;-webkit-text-stroke:.12px #111">100</div>
<div class="cell" style="left:868.5px;top:102.80px;width:21.5px;height:14.6px;background:#adca88;font-size:5.5px;line-height:14.8px;-webkit-text-stroke:.12px #111">121</div>
<div class="cell" style="left:891.0px;top:102.80px;width:21.5px;height:14.6px;background:#99da88;font-size:5.5px;line-height:14.8px;-webkit-text-stroke:.12px #111">114</div>
<div class="cell" style="left:913.5px;top:102.80px;width:21.5px;height:14.6px;background:#88d89c;font-size:5.5px;line-height:14.8px;-webkit-text-stroke:.12px #111">101</div>
<div class="cell" style="left:936.0px;top:102.80px;width:21.5px;height:14.6px;background:#88d69f;font-size:5.5px;line-height:14.8px;-webkit-text-stroke:.12px #111">100</div>
<div class="cell" style="left:958.5px;top:102.80px;width:21.5px;height:14.6px;background:#88d69f;font-size:5.5px;line-height:14.8px;-webkit-text-stroke:.12px #111">100</div>
<div class="cell" style="left:981.0px;top:102.80px;width:21.5px;height:14.6px;background:#88d69f;font-size:5.5px;line-height:14.8px;-webkit-text-stroke:.12px #111">100</div>
<div class="cell" style="left:1003.5px;top:102.80px;width:21.5px;height:14.6px;background:#88d69f;font-size:5.5px;line-height:14.8px;-webkit-text-stroke:.12px #111">100</div>
<div class="cell" style="left:1026.0px;top:102.80px;width:21.5px;height:14.6px;background:#88d69f;font-size:5.5px;line-height:14.8px;-webkit-text-stroke:.12px #111">100</div>
<div class="cell" style="left:1048.5px;top:102.80px;width:21.5px;height:14.6px;background:#88d69f;font-size:5.5px;line-height:14.8px;-webkit-text-stroke:.12px #111">100</div>
<div class="cell" style="left:1071.0px;top:102.80px;width:21.5px;height:14.6px;background:#88d69f;font-size:5.5px;line-height:14.8px;-webkit-text-stroke:.12px #111">100</div>
<div class="cell" style="left:1093.5px;top:102.80px;width:21.5px;height:14.6px;background:#88d69f;font-size:5.5px;line-height:14.8px;-webkit-text-stroke:.12px #111">100</div>
<div class="cell" style="left:1116.0px;top:102.80px;width:21.5px;height:14.6px;background:#88d69f;font-size:5.5px;line-height:14.8px;-webkit-text-stroke:.12px #111">100</div>
<div class="cell" style="left:1138.5px;top:102.80px;width:21.5px;height:14.6px;background:#88d69f;font-size:5.5px;line-height:14.8px;-webkit-text-stroke:.12px #111">100</div>
<div class="hc" style="left:779px;top:118.75px;width:20.5px;height:14px;font-size:5.5px;line-height:14.5px">100</div>
<div class="cell" style="left:801.0px;top:118.75px;width:21.5px;height:14.6px;background:#c9b388;font-size:5.5px;line-height:14.8px;-webkit-text-stroke:.12px #111">131</div>
<div class="cell" style="left:823.5px;top:118.75px;width:21.5px;height:14.6px;background:#9fd688;font-size:5.5px;line-height:14.8px;-webkit-text-stroke:.12px #111">116</div>
<div class="cell" style="left:846.0px;top:118.75px;width:21.5px;height:14.6px;background:#88d69f;font-size:5.5px;line-height:14.8px;-webkit-text-stroke:.12px #111">100</div>
<div class="cell" style="left:868.5px;top:118.75px;width:21.5px;height:14.6px;background:#adca88;font-size:5.5px;line-height:14.8px;-webkit-text-stroke:.12px #111">121</div>
<div class="cell" style="left:891.0px;top:118.75px;width:21.5px;height:14.6px;background:#99da88;font-size:5.5px;line-height:14.8px;-webkit-text-stroke:.12px #111">114</div>
<div class="cell" style="left:913.5px;top:118.75px;width:21.5px;height:14.6px;background:#88d89c;font-size:5.5px;line-height:14.8px;-webkit-text-stroke:.12px #111">101</div>
<div class="cell" style="left:936.0px;top:118.75px;width:21.5px;height:14.6px;background:#88d69f;font-size:5.5px;line-height:14.8px;-webkit-text-stroke:.12px #111">100</div>
<div class="cell" style="left:958.5px;top:118.75px;width:21.5px;height:14.6px;background:#88d3a2;font-size:5.5px;line-height:14.8px;-webkit-text-stroke:.12px #111">99</div>
<div class="cell" style="left:981.0px;top:118.75px;width:21.5px;height:14.6px;background:#88d1a4;font-size:5.5px;line-height:14.8px;-webkit-text-stroke:.12px #111">98</div>
<div class="cell" style="left:1003.5px;top:118.75px;width:21.5px;height:14.6px;background:#88cfa7;font-size:5.5px;line-height:14.8px;-webkit-text-stroke:.12px #111">97</div>
<div class="cell" style="left:1026.0px;top:118.75px;width:21.5px;height:14.6px;background:#88d69f;font-size:5.5px;line-height:14.8px;-webkit-text-stroke:.12px #111">100</div>
<div class="cell" style="left:1048.5px;top:118.75px;width:21.5px;height:14.6px;background:#88d69f;font-size:5.5px;line-height:14.8px;-webkit-text-stroke:.12px #111">100</div>
<div class="cell" style="left:1071.0px;top:118.75px;width:21.5px;height:14.6px;background:#88d69f;font-size:5.5px;line-height:14.8px;-webkit-text-stroke:.12px #111">100</div>
<div class="cell" style="left:1093.5px;top:118.75px;width:21.5px;height:14.6px;background:#88d69f;font-size:5.5px;line-height:14.8px;-webkit-text-stroke:.12px #111">100</div>
<div class="cell" style="left:1116.0px;top:118.75px;width:21.5px;height:14.6px;background:#88d69f;font-size:5.5px;line-height:14.8px;-webkit-text-stroke:.12px #111">100</div>
<div class="cell" style="left:1138.5px;top:118.75px;width:21.5px;height:14.6px;background:#88d69f;font-size:5.5px;line-height:14.8px;-webkit-text-stroke:.12px #111">100</div>
<div class="hc" style="left:779px;top:134.70px;width:20.5px;height:14px;font-size:5.5px;line-height:14.5px">80</div>
<div class="cell" style="left:801.0px;top:134.70px;width:21.5px;height:14.6px;background:#d4aa88;font-size:5.5px;line-height:14.8px;-webkit-text-stroke:.12px #111">135</div>
<div class="cell" style="left:823.5px;top:134.70px;width:21.5px;height:14.6px;background:#cfaf88;font-size:5.5px;line-height:14.8px;-webkit-text-stroke:.12px #111">133</div>
<div class="cell" style="left:846.0px;top:134.70px;width:21.5px;height:14.6px;background:#c9b388;font-size:5.5px;line-height:14.8px;-webkit-text-stroke:.12px #111">131</div>
<div class="cell" style="left:868.5px;top:134.70px;width:21.5px;height:14.6px;background:#88e38e;font-size:5.5px;line-height:14.8px;-webkit-text-stroke:.12px #111">106</div>
<div class="cell" style="left:891.0px;top:134.70px;width:21.5px;height:14.6px;background:#88e190;font-size:5.5px;line-height:14.8px;-webkit-text-stroke:.12px #111">105</div>
<div class="cell" style="left:913.5px;top:134.70px;width:21.5px;height:14.6px;background:#88e38e;font-size:5.5px;line-height:14.8px;-webkit-text-stroke:.12px #111">106</div>
<div class="cell" style="left:936.0px;top:134.70px;width:21.5px;height:14.6px;background:#88d69f;font-size:5.5px;line-height:14.8px;-webkit-text-stroke:.12px #111">100</div>
<div class="cell" style="left:958.5px;top:134.70px;width:21.5px;height:14.6px;background:#88cfa7;font-size:5.5px;line-height:14.8px;-webkit-text-stroke:.12px #111">97</div>
<div class="cell" style="left:981.0px;top:134.70px;width:21.5px;height:14.6px;background:#88caad;font-size:5.5px;line-height:14.8px;-webkit-text-stroke:.12px #111">95</div>
<div class="cell" style="left:1003.5px;top:134.70px;width:21.5px;height:14.6px;background:#88caad;font-size:5.5px;line-height:14.8px;-webkit-text-stroke:.12px #111">95</div>
<div class="cell" style="left:1026.0px;top:134.70px;width:21.5px;height:14.6px;background:#88cfa7;font-size:5.5px;line-height:14.8px;-webkit-text-stroke:.12px #111">97</div>
<div class="cell" style="left:1048.5px;top:134.70px;width:21.5px;height:14.6px;background:#88d69f;font-size:5.5px;line-height:14.8px;-webkit-text-stroke:.12px #111">100</div>
<div class="cell" style="left:1071.0px;top:134.70px;width:21.5px;height:14.6px;background:#88d69f;font-size:5.5px;line-height:14.8px;-webkit-text-stroke:.12px #111">100</div>
<div class="cell" style="left:1093.5px;top:134.70px;width:21.5px;height:14.6px;background:#88d69f;font-size:5.5px;line-height:14.8px;-webkit-text-stroke:.12px #111">100</div>
<div class="cell" style="left:1116.0px;top:134.70px;width:21.5px;height:14.6px;background:#88d69f;font-size:5.5px;line-height:14.8px;-webkit-text-stroke:.12px #111">100</div>
<div class="cell" style="left:1138.5px;top:134.70px;width:21.5px;height:14.6px;background:#88d69f;font-size:5.5px;line-height:14.8px;-webkit-text-stroke:.12px #111">100</div>
<div class="hc" style="left:779px;top:150.65px;width:20.5px;height:14px;font-size:5.5px;line-height:14.5px">60</div>
<div class="cell" style="left:801.0px;top:150.65px;width:21.5px;height:14.6px;background:#cfaf88;font-size:5.5px;line-height:14.8px;-webkit-text-stroke:.12px #111">133</div>
<div class="cell" style="left:823.5px;top:150.65px;width:21.5px;height:14.6px;background:#cfaf88;font-size:5.5px;line-height:14.8px;-webkit-text-stroke:.12px #111">133</div>
<div class="cell" style="left:846.0px;top:150.65px;width:21.5px;height:14.6px;background:#c4b888;font-size:5.5px;line-height:14.8px;-webkit-text-stroke:.12px #111">129</div>
<div class="cell" style="left:868.5px;top:150.65px;width:21.5px;height:14.6px;background:#8be688;font-size:5.5px;line-height:14.8px;-webkit-text-stroke:.12px #111">109</div>
<div class="cell" style="left:891.0px;top:150.65px;width:21.5px;height:14.6px;background:#88df93;font-size:5.5px;line-height:14.8px;-webkit-text-stroke:.12px #111">104</div>
<div class="cell" style="left:913.5px;top:150.65px;width:21.5px;height:14.6px;background:#88e190;font-size:5.5px;line-height:14.8px;-webkit-text-stroke:.12px #111">105</div>
<div class="cell" style="left:936.0px;top:150.65px;width:21.5px;height:14.6px;background:#88e190;font-size:5.5px;line-height:14.8px;-webkit-text-stroke:.12px #111">105</div>
<div class="cell" style="left:958.5px;top:150.65px;width:21.5px;height:14.6px;background:#88d89c;font-size:5.5px;line-height:14.8px;-webkit-text-stroke:.12px #111">101</div>
<div class="cell" style="left:981.0px;top:150.65px;width:21.5px;height:14.6px;background:#88c8b0;font-size:5.5px;line-height:14.8px;-webkit-text-stroke:.12px #111">94</div>
<div class="cell" style="left:1003.5px;top:150.65px;width:21.5px;height:14.6px;background:#88caad;font-size:5.5px;line-height:14.8px;-webkit-text-stroke:.12px #111">95</div>
<div class="cell" style="left:1026.0px;top:150.65px;width:21.5px;height:14.6px;background:#88d3a2;font-size:5.5px;line-height:14.8px;-webkit-text-stroke:.12px #111">99</div>
<div class="cell" style="left:1048.5px;top:150.65px;width:21.5px;height:14.6px;background:#88d69f;font-size:5.5px;line-height:14.8px;-webkit-text-stroke:.12px #111">100</div>
<div class="cell" style="left:1071.0px;top:150.65px;width:21.5px;height:14.6px;background:#88d69f;font-size:5.5px;line-height:14.8px;-webkit-text-stroke:.12px #111">100</div>
<div class="cell" style="left:1093.5px;top:150.65px;width:21.5px;height:14.6px;background:#88d69f;font-size:5.5px;line-height:14.8px;-webkit-text-stroke:.12px #111">100</div>
<div class="cell" style="left:1116.0px;top:150.65px;width:21.5px;height:14.6px;background:#88d69f;font-size:5.5px;line-height:14.8px;-webkit-text-stroke:.12px #111">100</div>
<div class="cell" style="left:1138.5px;top:150.65px;width:21.5px;height:14.6px;background:#88d69f;font-size:5.5px;line-height:14.8px;-webkit-text-stroke:.12px #111">100</div>
<div class="hc" style="left:779px;top:166.60px;width:20.5px;height:14px;font-size:5.5px;line-height:14.5px">50</div>
<div class="cell" style="left:801.0px;top:166.60px;width:21.5px;height:14.6px;background:#b5c388;font-size:5.5px;line-height:14.8px;-webkit-text-stroke:.12px #111">124</div>
<div class="cell" style="left:823.5px;top:166.60px;width:21.5px;height:14.6px;background:#adca88;font-size:5.5px;line-height:14.8px;-webkit-text-stroke:.12px #111">121</div>
<div class="cell" style="left:846.0px;top:166.60px;width:21.5px;height:14.6px;background:#b5c388;font-size:5.5px;line-height:14.8px;-webkit-text-stroke:.12px #111">124</div>
<div class="cell" style="left:868.5px;top:166.60px;width:21.5px;height:14.6px;background:#a2d388;font-size:5.5px;line-height:14.8px;-webkit-text-stroke:.12px #111">117</div>
<div class="cell" style="left:891.0px;top:166.60px;width:21.5px;height:14.6px;background:#88e190;font-size:5.5px;line-height:14.8px;-webkit-text-stroke:.12px #111">105</div>
<div class="cell" style="left:913.5px;top:166.60px;width:21.5px;height:14.6px;background:#88df93;font-size:5.5px;line-height:14.8px;-webkit-text-stroke:.12px #111">104</div>
<div class="cell" style="left:936.0px;top:166.60px;width:21.5px;height:14.6px;background:#88e68b;font-size:5.5px;line-height:14.8px;-webkit-text-stroke:.12px #111">107</div>
<div class="cell" style="left:958.5px;top:166.60px;width:21.5px;height:14.6px;background:#88df93;font-size:5.5px;line-height:14.8px;-webkit-text-stroke:.12px #111">104</div>
<div class="cell" style="left:981.0px;top:166.60px;width:21.5px;height:14.6px;background:#88c3b5;font-size:5.5px;line-height:14.8px;-webkit-text-stroke:.12px #111">92</div>
<div class="cell" style="left:1003.5px;top:166.60px;width:21.5px;height:14.6px;background:#88cfa7;font-size:5.5px;line-height:14.8px;-webkit-text-stroke:.12px #111">97</div>
<div class="cell" style="left:1026.0px;top:166.60px;width:21.5px;height:14.6px;background:#88d69f;font-size:5.5px;line-height:14.8px;-webkit-text-stroke:.12px #111">100</div>
<div class="cell" style="left:1048.5px;top:166.60px;width:21.5px;height:14.6px;background:#88d69f;font-size:5.5px;line-height:14.8px;-webkit-text-stroke:.12px #111">100</div>
<div class="cell" style="left:1071.0px;top:166.60px;width:21.5px;height:14.6px;background:#88d69f;font-size:5.5px;line-height:14.8px;-webkit-text-stroke:.12px #111">100</div>
<div class="cell" style="left:1093.5px;top:166.60px;width:21.5px;height:14.6px;background:#88d69f;font-size:5.5px;line-height:14.8px;-webkit-text-stroke:.12px #111">100</div>
<div class="cell" style="left:1116.0px;top:166.60px;width:21.5px;height:14.6px;background:#88d69f;font-size:5.5px;line-height:14.8px;-webkit-text-stroke:.12px #111">100</div>
<div class="cell" style="left:1138.5px;top:166.60px;width:21.5px;height:14.6px;background:#88d69f;font-size:5.5px;line-height:14.8px;-webkit-text-stroke:.12px #111">100</div>
<div class="hc" style="left:779px;top:182.55px;width:20.5px;height:14px;font-size:5.5px;line-height:14.5px">45</div>
<div class="cell" style="left:801.0px;top:182.55px;width:21.5px;height:14.6px;background:#b0c888;font-size:5.5px;line-height:14.8px;-webkit-text-stroke:.12px #111">122</div>
<div class="cell" style="left:823.5px;top:182.55px;width:21.5px;height:14.6px;background:#9fd688;font-size:5.5px;line-height:14.8px;-webkit-text-stroke:.12px #111">116</div>
<div class="cell" style="left:846.0px;top:182.55px;width:21.5px;height:14.6px;background:#9fd688;font-size:5.5px;line-height:14.8px;-webkit-text-stroke:.12px #111">116</div>
<div class="cell" style="left:868.5px;top:182.55px;width:21.5px;height:14.6px;background:#adca88;font-size:5.5px;line-height:14.8px;-webkit-text-stroke:.12px #111">121</div>
<div class="cell" style="left:891.0px;top:182.55px;width:21.5px;height:14.6px;background:#88e888;font-size:5.5px;line-height:14.8px;-webkit-text-stroke:.12px #111">108</div>
<div class="cell" style="left:913.5px;top:182.55px;width:21.5px;height:14.6px;background:#88e190;font-size:5.5px;line-height:14.8px;-webkit-text-stroke:.12px #111">105</div>
<div class="cell" style="left:936.0px;top:182.55px;width:21.5px;height:14.6px;background:#88e38e;font-size:5.5px;line-height:14.8px;-webkit-text-stroke:.12px #111">106</div>
<div class="cell" style="left:958.5px;top:182.55px;width:21.5px;height:14.6px;background:#88d89c;font-size:5.5px;line-height:14.8px;-webkit-text-stroke:.12px #111">101</div>
<div class="cell" style="left:981.0px;top:182.55px;width:21.5px;height:14.6px;background:#88c8b0;font-size:5.5px;line-height:14.8px;-webkit-text-stroke:.12px #111">94</div>
<div class="cell" style="left:1003.5px;top:182.55px;width:21.5px;height:14.6px;background:#88d1a4;font-size:5.5px;line-height:14.8px;-webkit-text-stroke:.12px #111">98</div>
<div class="cell" style="left:1026.0px;top:182.55px;width:21.5px;height:14.6px;background:#88d69f;font-size:5.5px;line-height:14.8px;-webkit-text-stroke:.12px #111">100</div>
<div class="cell" style="left:1048.5px;top:182.55px;width:21.5px;height:14.6px;background:#88d69f;font-size:5.5px;line-height:14.8px;-webkit-text-stroke:.12px #111">100</div>
<div class="cell" style="left:1071.0px;top:182.55px;width:21.5px;height:14.6px;background:#88d69f;font-size:5.5px;line-height:14.8px;-webkit-text-stroke:.12px #111">100</div>
<div class="cell" style="left:1093.5px;top:182.55px;width:21.5px;height:14.6px;background:#88d69f;font-size:5.5px;line-height:14.8px;-webkit-text-stroke:.12px #111">100</div>
<div class="cell" style="left:1116.0px;top:182.55px;width:21.5px;height:14.6px;background:#88d69f;font-size:5.5px;line-height:14.8px;-webkit-text-stroke:.12px #111">100</div>
<div class="cell" style="left:1138.5px;top:182.55px;width:21.5px;height:14.6px;background:#88d69f;font-size:5.5px;line-height:14.8px;-webkit-text-stroke:.12px #111">100</div>
<div class="hc" style="left:779px;top:198.50px;width:20.5px;height:14px;font-size:5.5px;line-height:14.5px">40</div>
<div class="cell" style="left:801.0px;top:198.50px;width:21.5px;height:14.6px;background:#a7cf88;font-size:5.5px;line-height:14.8px;-webkit-text-stroke:.12px #111">119</div>
<div class="cell" style="left:823.5px;top:198.50px;width:21.5px;height:14.6px;background:#8be688;font-size:5.5px;line-height:14.8px;-webkit-text-stroke:.12px #111">109</div>
<div class="cell" style="left:846.0px;top:198.50px;width:21.5px;height:14.6px;background:#a2d388;font-size:5.5px;line-height:14.8px;-webkit-text-stroke:.12px #111">117</div>
<div class="cell" style="left:868.5px;top:198.50px;width:21.5px;height:14.6px;background:#aacd88;font-size:5.5px;line-height:14.8px;-webkit-text-stroke:.12px #111">120</div>
<div class="cell" style="left:891.0px;top:198.50px;width:21.5px;height:14.6px;background:#99da88;font-size:5.5px;line-height:14.8px;-webkit-text-stroke:.12px #111">114</div>
<div class="cell" style="left:913.5px;top:198.50px;width:21.5px;height:14.6px;background:#88e190;font-size:5.5px;line-height:14.8px;-webkit-text-stroke:.12px #111">105</div>
<div class="cell" style="left:936.0px;top:198.50px;width:21.5px;height:14.6px;background:#88e190;font-size:5.5px;line-height:14.8px;-webkit-text-stroke:.12px #111">105</div>
<div class="cell" style="left:958.5px;top:198.50px;width:21.5px;height:14.6px;background:#88da99;font-size:5.5px;line-height:14.8px;-webkit-text-stroke:.12px #111">102</div>
<div class="cell" style="left:981.0px;top:198.50px;width:21.5px;height:14.6px;background:#88caad;font-size:5.5px;line-height:14.8px;-webkit-text-stroke:.12px #111">95</div>
<div class="cell" style="left:1003.5px;top:198.50px;width:21.5px;height:14.6px;background:#88d1a4;font-size:5.5px;line-height:14.8px;-webkit-text-stroke:.12px #111">98</div>
<div class="cell" style="left:1026.0px;top:198.50px;width:21.5px;height:14.6px;background:#88d69f;font-size:5.5px;line-height:14.8px;-webkit-text-stroke:.12px #111">100</div>
<div class="cell" style="left:1048.5px;top:198.50px;width:21.5px;height:14.6px;background:#88d69f;font-size:5.5px;line-height:14.8px;-webkit-text-stroke:.12px #111">100</div>
<div class="cell" style="left:1071.0px;top:198.50px;width:21.5px;height:14.6px;background:#88d69f;font-size:5.5px;line-height:14.8px;-webkit-text-stroke:.12px #111">100</div>
<div class="cell" style="left:1093.5px;top:198.50px;width:21.5px;height:14.6px;background:#88d69f;font-size:5.5px;line-height:14.8px;-webkit-text-stroke:.12px #111">100</div>
<div class="cell" style="left:1116.0px;top:198.50px;width:21.5px;height:14.6px;background:#88d69f;font-size:5.5px;line-height:14.8px;-webkit-text-stroke:.12px #111">100</div>
<div class="cell" style="left:1138.5px;top:198.50px;width:21.5px;height:14.6px;background:#88d69f;font-size:5.5px;line-height:14.8px;-webkit-text-stroke:.12px #111">100</div>
<div class="hc" style="left:779px;top:214.45px;width:20.5px;height:14px;font-size:5.5px;line-height:14.5px">35</div>
<div class="cell" style="left:801.0px;top:214.45px;width:21.5px;height:14.6px;background:#c9b388;font-size:5.5px;line-height:14.8px;-webkit-text-stroke:.12px #111">131</div>
<div class="cell" style="left:823.5px;top:214.45px;width:21.5px;height:14.6px;background:#a7cf88;font-size:5.5px;line-height:14.8px;-webkit-text-stroke:.12px #111">119</div>
<div class="cell" style="left:846.0px;top:214.45px;width:21.5px;height:14.6px;background:#b2c688;font-size:5.5px;line-height:14.8px;-webkit-text-stroke:.12px #111">123</div>
<div class="cell" style="left:868.5px;top:214.45px;width:21.5px;height:14.6px;background:#adca88;font-size:5.5px;line-height:14.8px;-webkit-text-stroke:.12px #111">121</div>
<div class="cell" style="left:891.0px;top:214.45px;width:21.5px;height:14.6px;background:#9cd888;font-size:5.5px;line-height:14.8px;-webkit-text-stroke:.12px #111">115</div>
<div class="cell" style="left:913.5px;top:214.45px;width:21.5px;height:14.6px;background:#93df88;font-size:5.5px;line-height:14.8px;-webkit-text-stroke:.12px #111">112</div>
<div class="cell" style="left:936.0px;top:214.45px;width:21.5px;height:14.6px;background:#88e888;font-size:5.5px;line-height:14.8px;-webkit-text-stroke:.12px #111">108</div>
<div class="cell" style="left:958.5px;top:214.45px;width:21.5px;height:14.6px;background:#88caad;font-size:5.5px;line-height:14.8px;-webkit-text-stroke:.12px #111">95</div>
<div class="cell" style="left:981.0px;top:214.45px;width:21.5px;height:14.6px;background:#88add2;font-size:5.5px;line-height:14.8px;-webkit-text-stroke:.12px #111">82</div>
<div class="cell" style="left:1003.5px;top:214.45px;width:21.5px;height:14.6px;background:#88b6c6;font-size:5.5px;line-height:14.8px;-webkit-text-stroke:.12px #111">86</div>
<div class="cell" style="left:1026.0px;top:214.45px;width:21.5px;height:14.6px;background:#c6e022;font-size:5.5px;line-height:14.8px;-webkit-text-stroke:.12px #111">94</div>
<div class="cell" style="left:1048.5px;top:214.45px;width:21.5px;height:14.6px;background:#aad83c;font-size:5.5px;line-height:14.8px;-webkit-text-stroke:.12px #111">97</div>
<div class="cell" style="left:1071.0px;top:214.45px;width:21.5px;height:14.6px;background:#88d69f;font-size:5.5px;line-height:14.8px;-webkit-text-stroke:.12px #111">100</div>
<div class="cell" style="left:1093.5px;top:214.45px;width:21.5px;height:14.6px;background:#88d69f;font-size:5.5px;line-height:14.8px;-webkit-text-stroke:.12px #111">100</div>
<div class="cell" style="left:1116.0px;top:214.45px;width:21.5px;height:14.6px;background:#88d69f;font-size:5.5px;line-height:14.8px;-webkit-text-stroke:.12px #111">100</div>
<div class="cell" style="left:1138.5px;top:214.45px;width:21.5px;height:14.6px;background:#88d69f;font-size:5.5px;line-height:14.8px;-webkit-text-stroke:.12px #111">100</div>
<div class="hc" style="left:779px;top:230.40px;width:20.5px;height:14px;font-size:5.5px;line-height:14.5px">30</div>
<div class="cell" style="left:801.0px;top:230.40px;width:21.5px;height:14.6px;background:#e89a88;font-size:5.5px;line-height:14.8px;-webkit-text-stroke:.12px #111">142</div>
<div class="cell" style="left:823.5px;top:230.40px;width:21.5px;height:14.6px;background:#bbbf88;font-size:5.5px;line-height:14.8px;-webkit-text-stroke:.12px #111">126</div>
<div class="cell" style="left:846.0px;top:230.40px;width:21.5px;height:14.6px;background:#b5c388;font-size:5.5px;line-height:14.8px;-webkit-text-stroke:.12px #111">124</div>
<div class="cell" style="left:868.5px;top:230.40px;width:21.5px;height:14.6px;background:#b5c388;font-size:5.5px;line-height:14.8px;-webkit-text-stroke:.12px #111">124</div>
<div class="cell" style="left:891.0px;top:230.40px;width:21.5px;height:14.6px;background:#93df88;font-size:5.5px;line-height:14.8px;-webkit-text-stroke:.12px #111">112</div>
<div class="cell" style="left:913.5px;top:230.40px;width:21.5px;height:14.6px;background:#90e188;font-size:5.5px;line-height:14.8px;-webkit-text-stroke:.12px #111">111</div>
<div class="cell" style="left:936.0px;top:230.40px;width:21.5px;height:14.6px;background:#88e888;font-size:5.5px;line-height:14.8px;-webkit-text-stroke:.12px #111">108</div>
<div class="cell" style="left:958.5px;top:230.40px;width:21.5px;height:14.6px;background:#88c6b2;font-size:5.5px;line-height:14.8px;-webkit-text-stroke:.12px #111">93</div>
<div class="cell" style="left:981.0px;top:230.40px;width:21.5px;height:14.6px;background:#8896ee;font-size:5.5px;line-height:14.8px;-webkit-text-stroke:.12px #111">72</div>
<div class="cell" style="left:1003.5px;top:230.40px;width:21.5px;height:14.6px;background:#889de6;font-size:5.5px;line-height:14.8px;-webkit-text-stroke:.12px #111">75</div>
<div class="cell" style="left:1026.0px;top:230.40px;width:21.5px;height:14.6px;background:#a2c852;font-size:5.5px;line-height:14.8px;-webkit-text-stroke:.12px #111">87</div>
<div class="cell" style="left:1048.5px;top:230.40px;width:21.5px;height:14.6px;background:#98cc5a;font-size:5.5px;line-height:14.8px;-webkit-text-stroke:.12px #111">93</div>
<div class="cell" style="left:1071.0px;top:230.40px;width:21.5px;height:14.6px;background:#88d3a2;font-size:5.5px;line-height:14.8px;-webkit-text-stroke:.12px #111">99</div>
<div class="cell" style="left:1093.5px;top:230.40px;width:21.5px;height:14.6px;background:#88d69f;font-size:5.5px;line-height:14.8px;-webkit-text-stroke:.12px #111">100</div>
<div class="cell" style="left:1116.0px;top:230.40px;width:21.5px;height:14.6px;background:#88d69f;font-size:5.5px;line-height:14.8px;-webkit-text-stroke:.12px #111">100</div>
<div class="cell" style="left:1138.5px;top:230.40px;width:21.5px;height:14.6px;background:#88d69f;font-size:5.5px;line-height:14.8px;-webkit-text-stroke:.12px #111">100</div>
<div class="hc" style="left:779px;top:246.35px;width:20.5px;height:14px;font-size:5.5px;line-height:14.5px">25</div>
<div class="cell" style="left:801.0px;top:246.35px;width:21.5px;height:14.6px;background:#eb9888;font-size:5.5px;line-height:14.8px;-webkit-text-stroke:.12px #111">143</div>
<div class="cell" style="left:823.5px;top:246.35px;width:21.5px;height:14.6px;background:#b5c388;font-size:5.5px;line-height:14.8px;-webkit-text-stroke:.12px #111">124</div>
<div class="cell" style="left:846.0px;top:246.35px;width:21.5px;height:14.6px;background:#aacd88;font-size:5.5px;line-height:14.8px;-webkit-text-stroke:.12px #111">120</div>
<div class="cell" style="left:868.5px;top:246.35px;width:21.5px;height:14.6px;background:#b0c888;font-size:5.5px;line-height:14.8px;-webkit-text-stroke:.12px #111">122</div>
<div class="cell" style="left:891.0px;top:246.35px;width:21.5px;height:14.6px;background:#99da88;font-size:5.5px;line-height:14.8px;-webkit-text-stroke:.12px #111">114</div>
<div class="cell" style="left:913.5px;top:246.35px;width:21.5px;height:14.6px;background:#8ee388;font-size:5.5px;line-height:14.8px;-webkit-text-stroke:.12px #111">110</div>
<div class="cell" style="left:936.0px;top:246.35px;width:21.5px;height:14.6px;background:#88e68b;font-size:5.5px;line-height:14.8px;-webkit-text-stroke:.12px #111">107</div>
<div class="cell" style="left:958.5px;top:246.35px;width:21.5px;height:14.6px;background:#88bac1;font-size:5.5px;line-height:14.8px;-webkit-text-stroke:.12px #111">88</div>
<div class="cell" style="left:981.0px;top:246.35px;width:21.5px;height:14.6px;background:#888ff6;font-size:5.5px;line-height:14.8px;-webkit-text-stroke:.12px #111">69</div>
<div class="cell" style="left:1003.5px;top:246.35px;width:21.5px;height:14.6px;background:#889de6;font-size:5.5px;line-height:14.8px;-webkit-text-stroke:.12px #111">75</div>
<div class="cell" style="left:1026.0px;top:246.35px;width:21.5px;height:14.6px;background:#88b8c4;font-size:5.5px;line-height:14.8px;-webkit-text-stroke:.12px #111">87</div>
<div class="cell" style="left:1048.5px;top:246.35px;width:21.5px;height:14.6px;background:#88c6b2;font-size:5.5px;line-height:14.8px;-webkit-text-stroke:.12px #111">93</div>
<div class="cell" style="left:1071.0px;top:246.35px;width:21.5px;height:14.6px;background:#88d3a2;font-size:5.5px;line-height:14.8px;-webkit-text-stroke:.12px #111">99</div>
<div class="cell" style="left:1093.5px;top:246.35px;width:21.5px;height:14.6px;background:#88d69f;font-size:5.5px;line-height:14.8px;-webkit-text-stroke:.12px #111">100</div>
<div class="cell" style="left:1116.0px;top:246.35px;width:21.5px;height:14.6px;background:#88d69f;font-size:5.5px;line-height:14.8px;-webkit-text-stroke:.12px #111">100</div>
<div class="cell" style="left:1138.5px;top:246.35px;width:21.5px;height:14.6px;background:#88d69f;font-size:5.5px;line-height:14.8px;-webkit-text-stroke:.12px #111">100</div>
<div class="hc" style="left:779px;top:262.30px;width:20.5px;height:14px;font-size:5.5px;line-height:14.5px">20</div>
<div class="cell" style="left:801.0px;top:262.30px;width:21.5px;height:14.6px;background:#e0a188;font-size:5.5px;line-height:14.8px;-webkit-text-stroke:.12px #111">139</div>
<div class="cell" style="left:823.5px;top:262.30px;width:21.5px;height:14.6px;background:#bbbf88;font-size:5.5px;line-height:14.8px;-webkit-text-stroke:.12px #111">126</div>
<div class="cell" style="left:846.0px;top:262.30px;width:21.5px;height:14.6px;background:#bbbf88;font-size:5.5px;line-height:14.8px;-webkit-text-stroke:.12px #111">126</div>
<div class="cell" style="left:868.5px;top:262.30px;width:21.5px;height:14.6px;background:#b5c388;font-size:5.5px;line-height:14.8px;-webkit-text-stroke:.12px #111">124</div>
<div class="cell" style="left:891.0px;top:262.30px;width:21.5px;height:14.6px;background:#90e188;font-size:5.5px;line-height:14.8px;-webkit-text-stroke:.12px #111">111</div>
<div class="cell" style="left:913.5px;top:262.30px;width:21.5px;height:14.6px;background:#8be688;font-size:5.5px;line-height:14.8px;-webkit-text-stroke:.12px #111">109</div>
<div class="cell" style="left:936.0px;top:262.30px;width:21.5px;height:14.6px;background:#88e888;font-size:5.5px;line-height:14.8px;-webkit-text-stroke:.12px #111">108</div>
<div class="cell" style="left:958.5px;top:262.30px;width:21.5px;height:14.6px;background:#88bac1;font-size:5.5px;line-height:14.8px;-webkit-text-stroke:.12px #111">88</div>
<div class="cell" style="left:981.0px;top:262.30px;width:21.5px;height:14.6px;background:#888ff6;font-size:5.5px;line-height:14.8px;-webkit-text-stroke:.12px #111">69</div>
<div class="cell" style="left:1003.5px;top:262.30px;width:21.5px;height:14.6px;background:#889de6;font-size:5.5px;line-height:14.8px;-webkit-text-stroke:.12px #111">75</div>
<div class="cell" style="left:1026.0px;top:262.30px;width:21.5px;height:14.6px;background:#88b8c4;font-size:5.5px;line-height:14.8px;-webkit-text-stroke:.12px #111">87</div>
<div class="cell" style="left:1048.5px;top:262.30px;width:21.5px;height:14.6px;background:#88c6b2;font-size:5.5px;line-height:14.8px;-webkit-text-stroke:.12px #111">93</div>
<div class="cell" style="left:1071.0px;top:262.30px;width:21.5px;height:14.6px;background:#88d3a2;font-size:5.5px;line-height:14.8px;-webkit-text-stroke:.12px #111">99</div>
<div class="cell" style="left:1093.5px;top:262.30px;width:21.5px;height:14.6px;background:#88d69f;font-size:5.5px;line-height:14.8px;-webkit-text-stroke:.12px #111">100</div>
<div class="cell" style="left:1116.0px;top:262.30px;width:21.5px;height:14.6px;background:#88d69f;font-size:5.5px;line-height:14.8px;-webkit-text-stroke:.12px #111">100</div>
<div class="cell" style="left:1138.5px;top:262.30px;width:21.5px;height:14.6px;background:#88d69f;font-size:5.5px;line-height:14.8px;-webkit-text-stroke:.12px #111">100</div>
<div class="hc" style="left:779px;top:278.25px;width:20.5px;height:14px;font-size:5.5px;line-height:14.5px">15</div>
<div class="cell" style="left:801.0px;top:278.25px;width:21.5px;height:14.6px;background:#f49188;font-size:5.5px;line-height:14.8px;-webkit-text-stroke:.12px #111">146</div>
<div class="cell" style="left:823.5px;top:278.25px;width:21.5px;height:14.6px;background:#d2ad88;font-size:5.5px;line-height:14.8px;-webkit-text-stroke:.12px #111">134</div>
<div class="cell" style="left:846.0px;top:278.25px;width:21.5px;height:14.6px;background:#bebd88;font-size:5.5px;line-height:14.8px;-webkit-text-stroke:.12px #111">127</div>
<div class="cell" style="left:868.5px;top:278.25px;width:21.5px;height:14.6px;background:#a2d388;font-size:5.5px;line-height:14.8px;-webkit-text-stroke:.12px #111">117</div>
<div class="cell" style="left:891.0px;top:278.25px;width:21.5px;height:14.6px;background:#8be688;font-size:5.5px;line-height:14.8px;-webkit-text-stroke:.12px #111">109</div>
<div class="cell" style="left:913.5px;top:278.25px;width:21.5px;height:14.6px;background:#88e190;font-size:5.5px;line-height:14.8px;-webkit-text-stroke:.12px #111">105</div>
<div class="cell" style="left:936.0px;top:278.25px;width:21.5px;height:14.6px;background:#88d89c;font-size:5.5px;line-height:14.8px;-webkit-text-stroke:.12px #111">101</div>
<div class="cell" style="left:958.5px;top:278.25px;width:21.5px;height:14.6px;background:#88b6c6;font-size:5.5px;line-height:14.8px;-webkit-text-stroke:.12px #111">86</div>
<div class="cell" style="left:981.0px;top:278.25px;width:21.5px;height:14.6px;background:#888df9;font-size:5.5px;line-height:14.8px;-webkit-text-stroke:.12px #111">68</div>
<div class="cell" style="left:1003.5px;top:278.25px;width:21.5px;height:14.6px;background:#8898eb;font-size:5.5px;line-height:14.8px;-webkit-text-stroke:.12px #111">73</div>
<div class="cell" style="left:1026.0px;top:278.25px;width:21.5px;height:14.6px;background:#88b8c4;font-size:5.5px;line-height:14.8px;-webkit-text-stroke:.12px #111">87</div>
<div class="cell" style="left:1048.5px;top:278.25px;width:21.5px;height:14.6px;background:#88c6b2;font-size:5.5px;line-height:14.8px;-webkit-text-stroke:.12px #111">93</div>
<div class="cell" style="left:1071.0px;top:278.25px;width:21.5px;height:14.6px;background:#88d3a2;font-size:5.5px;line-height:14.8px;-webkit-text-stroke:.12px #111">99</div>
<div class="cell" style="left:1093.5px;top:278.25px;width:21.5px;height:14.6px;background:#88d69f;font-size:5.5px;line-height:14.8px;-webkit-text-stroke:.12px #111">100</div>
<div class="cell" style="left:1116.0px;top:278.25px;width:21.5px;height:14.6px;background:#88d69f;font-size:5.5px;line-height:14.8px;-webkit-text-stroke:.12px #111">100</div>
<div class="cell" style="left:1138.5px;top:278.25px;width:21.5px;height:14.6px;background:#88d69f;font-size:5.5px;line-height:14.8px;-webkit-text-stroke:.12px #111">100</div>
<div class="hc" style="left:779px;top:294.20px;width:20.5px;height:14px;font-size:5.5px;line-height:14.5px">10</div>
<div class="cell" style="left:801.0px;top:294.20px;width:21.5px;height:14.6px;background:#f19388;font-size:5.5px;line-height:14.8px;-webkit-text-stroke:.12px #111">145</div>
<div class="cell" style="left:823.5px;top:294.20px;width:21.5px;height:14.6px;background:#dda388;font-size:5.5px;line-height:14.8px;-webkit-text-stroke:.12px #111">138</div>
<div class="cell" style="left:846.0px;top:294.20px;width:21.5px;height:14.6px;background:#c6b688;font-size:5.5px;line-height:14.8px;-webkit-text-stroke:.12px #111">130</div>
<div class="cell" style="left:868.5px;top:294.20px;width:21.5px;height:14.6px;background:#a7cf88;font-size:5.5px;line-height:14.8px;-webkit-text-stroke:.12px #111">119</div>
<div class="cell" style="left:891.0px;top:294.20px;width:21.5px;height:14.6px;background:#88e38e;font-size:5.5px;line-height:14.8px;-webkit-text-stroke:.12px #111">106</div>
<div class="cell" style="left:913.5px;top:294.20px;width:21.5px;height:14.6px;background:#88dd96;font-size:5.5px;line-height:14.8px;-webkit-text-stroke:.12px #111">103</div>
<div class="cell" style="left:936.0px;top:294.20px;width:21.5px;height:14.6px;background:#88da99;font-size:5.5px;line-height:14.8px;-webkit-text-stroke:.12px #111">102</div>
<div class="cell" style="left:958.5px;top:294.20px;width:21.5px;height:14.6px;background:#88b3c9;font-size:5.5px;line-height:14.8px;-webkit-text-stroke:.12px #111">85</div>
<div class="cell" style="left:981.0px;top:294.20px;width:21.5px;height:14.6px;background:#888df9;font-size:5.5px;line-height:14.8px;-webkit-text-stroke:.12px #111">68</div>
<div class="cell" style="left:1003.5px;top:294.20px;width:21.5px;height:14.6px;background:#889ae8;font-size:5.5px;line-height:14.8px;-webkit-text-stroke:.12px #111">74</div>
<div class="cell" style="left:1026.0px;top:294.20px;width:21.5px;height:14.6px;background:#88b8c4;font-size:5.5px;line-height:14.8px;-webkit-text-stroke:.12px #111">87</div>
<div class="cell" style="left:1048.5px;top:294.20px;width:21.5px;height:14.6px;background:#88c6b2;font-size:5.5px;line-height:14.8px;-webkit-text-stroke:.12px #111">93</div>
<div class="cell" style="left:1071.0px;top:294.20px;width:21.5px;height:14.6px;background:#88d3a2;font-size:5.5px;line-height:14.8px;-webkit-text-stroke:.12px #111">99</div>
<div class="cell" style="left:1093.5px;top:294.20px;width:21.5px;height:14.6px;background:#88d69f;font-size:5.5px;line-height:14.8px;-webkit-text-stroke:.12px #111">100</div>
<div class="cell" style="left:1116.0px;top:294.20px;width:21.5px;height:14.6px;background:#88d69f;font-size:5.5px;line-height:14.8px;-webkit-text-stroke:.12px #111">100</div>
<div class="cell" style="left:1138.5px;top:294.20px;width:21.5px;height:14.6px;background:#88d69f;font-size:5.5px;line-height:14.8px;-webkit-text-stroke:.12px #111">100</div>
<div class="hc" style="left:779px;top:310.15px;width:20.5px;height:12.6px;font-size:5.5px;line-height:14.5px">5</div>
<div class="cell" style="left:801.0px;top:310.15px;width:21.5px;height:12.7px;background:#f19388;font-size:5.5px;line-height:14.8px;-webkit-text-stroke:.12px #111">145</div>
<div class="cell" style="left:823.5px;top:310.15px;width:21.5px;height:12.7px;background:#ff8888;font-size:5.5px;line-height:14.8px;-webkit-text-stroke:.12px #111">150</div>
<div class="cell" style="left:846.0px;top:310.15px;width:21.5px;height:12.7px;background:#c4b888;font-size:5.5px;line-height:14.8px;-webkit-text-stroke:.12px #111">129</div>
<div class="cell" style="left:868.5px;top:310.15px;width:21.5px;height:12.7px;background:#cfaf88;font-size:5.5px;line-height:14.8px;-webkit-text-stroke:.12px #111">133</div>
<div class="cell" style="left:891.0px;top:310.15px;width:21.5px;height:12.7px;background:#daa688;font-size:5.5px;line-height:14.8px;-webkit-text-stroke:.12px #111">137</div>
<div class="cell" style="left:913.5px;top:310.15px;width:21.5px;height:12.7px;background:#f19388;font-size:5.5px;line-height:14.8px;-webkit-text-stroke:.12px #111">145</div>
<div class="cell" style="left:936.0px;top:310.15px;width:21.5px;height:12.7px;background:#dda388;font-size:5.5px;line-height:14.8px;-webkit-text-stroke:.12px #111">138</div>
<div class="cell" style="left:958.5px;top:310.15px;width:21.5px;height:12.7px;background:#88cdaa;font-size:5.5px;line-height:14.8px;-webkit-text-stroke:.12px #111">96</div>
<div class="cell" style="left:981.0px;top:310.15px;width:21.5px;height:12.7px;background:#888ff6;font-size:5.5px;line-height:14.8px;-webkit-text-stroke:.12px #111">69</div>
<div class="cell" style="left:1003.5px;top:310.15px;width:21.5px;height:12.7px;background:#8888ff;font-size:5.5px;line-height:14.8px;-webkit-text-stroke:.12px #111">66</div>
<div class="cell" style="left:1026.0px;top:310.15px;width:21.5px;height:12.7px;background:#88a3dd;font-size:5.5px;line-height:14.8px;-webkit-text-stroke:.12px #111">78</div>
<div class="cell" style="left:1048.5px;top:310.15px;width:21.5px;height:12.7px;background:#88c6b2;font-size:5.5px;line-height:14.8px;-webkit-text-stroke:.12px #111">93</div>
<div class="cell" style="left:1071.0px;top:310.15px;width:21.5px;height:12.7px;background:#88d3a2;font-size:5.5px;line-height:14.8px;-webkit-text-stroke:.12px #111">99</div>
<div class="cell" style="left:1093.5px;top:310.15px;width:21.5px;height:12.7px;background:#88d69f;font-size:5.5px;line-height:14.8px;-webkit-text-stroke:.12px #111">100</div>
<div class="cell" style="left:1116.0px;top:310.15px;width:21.5px;height:12.7px;background:#88d69f;font-size:5.5px;line-height:14.8px;-webkit-text-stroke:.12px #111">100</div>
<div class="cell" style="left:1138.5px;top:310.15px;width:21.5px;height:12.7px;background:#88d69f;font-size:5.5px;line-height:14.8px;-webkit-text-stroke:.12px #111">100</div>
<div class="hc" style="left:802.0px;top:323.7px;width:21.3px;height:27px;font-size:5.5px;line-height:28.5px">500</div>
<div class="hc" style="left:824.5px;top:323.7px;width:21.3px;height:27px;font-size:5.5px;line-height:28.5px">800</div>
<div class="hc" style="left:847.0px;top:323.7px;width:21.3px;height:27px;font-size:5.5px;line-height:28.5px">1100</div>
<div class="hc" style="left:869.5px;top:323.7px;width:21.3px;height:27px;font-size:5.5px;line-height:28.5px">1500</div>
<div class="hc" style="left:892.0px;top:323.7px;width:21.3px;height:27px;font-size:5.5px;line-height:28.5px">2000</div>
<div class="hc" style="left:914.5px;top:323.7px;width:21.3px;height:27px;font-size:5.5px;line-height:28.5px">2400</div>
<div class="hc" style="left:937.0px;top:323.7px;width:21.3px;height:27px;font-size:5.5px;line-height:28.5px">3000</div>
<div class="hc" style="left:959.5px;top:323.7px;width:21.3px;height:27px;font-size:5.5px;line-height:28.5px">3500</div>
<div class="hc" style="left:982.0px;top:323.7px;width:21.3px;height:27px;font-size:5.5px;line-height:28.5px">4000</div>
<div class="hc" style="left:1004.5px;top:323.7px;width:21.3px;height:27px;font-size:5.5px;line-height:28.5px">4400</div>
<div class="hc" style="left:1027.0px;top:323.7px;width:21.3px;height:27px;font-size:5.5px;line-height:28.5px">4800</div>
<div class="hc" style="left:1049.5px;top:323.7px;width:21.3px;height:27px;font-size:5.5px;line-height:28.5px">5200</div>
<div class="hc" style="left:1072.0px;top:323.7px;width:21.3px;height:27px;font-size:5.5px;line-height:28.5px">5400</div>
<div class="hc" style="left:1094.5px;top:323.7px;width:21.3px;height:27px;font-size:5.5px;line-height:28.5px">5800</div>
<div class="hc" style="left:1117.0px;top:323.7px;width:21.3px;height:27px;font-size:5.5px;line-height:28.5px">6000</div>
<div class="hc" style="left:1139.5px;top:323.7px;width:21.3px;height:27px;font-size:5.5px;line-height:28.5px">6200</div>
<div class="a" style="left:1161.6px;top:323.7px;width:5.2px;height:27px;background:#c0c0c0"></div>
<div class="a" style="left:781px;top:327.2px;width:17px;height:20.2px;background:#fff;border-radius:4.5px;box-shadow:0 1px 1.5px rgba(0,0,0,.28)"></div><svg class="a" style="left:781px;top:327.2px;overflow:visible" width="17" height="20.2" viewBox="0 0 17 20.2"><path d="M4.4 4.1V13.2H13.3" fill="none" stroke="#000" stroke-width="2.3"/><path d="M4.4 1.6L7.9 5.5H0.9000000000000004Z M15.8 13.2L12.200000000000001 9.899999999999999V16.5Z" fill="#000"/></svg>
<svg class="a" style="left:773px;top:37px" width="399" height="320" viewBox="773 37 399 320">
<polyline points="928,171.4 930,173 933.6,175.6 938,177 940,178 943.6,182 947,181 950,172 954,169.6 959,166.4 963,167.6 966.4,167.6 970,164 973.6,164.6 978,163 982,162 985,161 988,157.4 991.6,155.6 996,154 1000.4,151.6 1005,151.6 1009,148.6 1014.4,148.6 1019,150 1023,150 1026,150.6 1030,151.6 1034,151 1038,151.6 1042.4,158 1044.4,169.6 1044.8,190 1045,226.5" fill="none" stroke="#2a3cf0" stroke-width="1.3"/>
<circle cx="928" cy="171.4" r="1.9" fill="#1414ea"/>
<circle cx="930" cy="173" r="1.9" fill="#1414ea"/>
<circle cx="933.6" cy="175.6" r="1.9" fill="#1414ea"/>
<circle cx="938" cy="177" r="1.9" fill="#1414ea"/>
<circle cx="940" cy="178" r="1.9" fill="#1414ea"/>
<circle cx="943.6" cy="182" r="1.9" fill="#1414ea"/>
<circle cx="947" cy="181" r="1.9" fill="#1414ea"/>
<circle cx="950" cy="172" r="1.9" fill="#1414ea"/>
<circle cx="954" cy="169.6" r="1.9" fill="#1414ea"/>
<circle cx="959" cy="166.4" r="1.9" fill="#1414ea"/>
<circle cx="963" cy="167.6" r="1.9" fill="#1414ea"/>
<circle cx="966.4" cy="167.6" r="1.9" fill="#1414ea"/>
<circle cx="970" cy="164" r="1.9" fill="#1414ea"/>
<circle cx="973.6" cy="164.6" r="1.9" fill="#1414ea"/>
<circle cx="978" cy="163" r="1.9" fill="#1414ea"/>
<circle cx="982" cy="162" r="1.9" fill="#1414ea"/>
<circle cx="985" cy="161" r="1.9" fill="#1414ea"/>
<circle cx="988" cy="157.4" r="1.9" fill="#1414ea"/>
<circle cx="991.6" cy="155.6" r="1.9" fill="#1414ea"/>
<circle cx="996" cy="154" r="1.9" fill="#1414ea"/>
<circle cx="1000.4" cy="151.6" r="1.9" fill="#1414ea"/>
<circle cx="1005" cy="151.6" r="1.9" fill="#1414ea"/>
<circle cx="1009" cy="148.6" r="1.9" fill="#1414ea"/>
<circle cx="1014.4" cy="148.6" r="1.9" fill="#1414ea"/>
<circle cx="1019" cy="150" r="1.9" fill="#1414ea"/>
<circle cx="1023" cy="150" r="1.9" fill="#1414ea"/>
<circle cx="1026" cy="150.6" r="1.9" fill="#1414ea"/>
<circle cx="1030" cy="151.6" r="1.9" fill="#1414ea"/>
<circle cx="1034" cy="151" r="1.9" fill="#1414ea"/>
<circle cx="1038" cy="151.6" r="1.9" fill="#1414ea"/>
<circle cx="1042.4" cy="158" r="1.9" fill="#1414ea"/>
<circle cx="1044.4" cy="169.6" r="1.9" fill="#1414ea"/>
<circle cx="1044.6" cy="169.6" r="1.9" fill="#1414ea"/>
<circle cx="1044.8" cy="190" r="1.9" fill="#1414ea"/>
<ellipse cx="1046" cy="226.5" rx="8.3" ry="6" fill="none" stroke="#1a1ad0" stroke-width="1.4"/>
</svg>
<div class="btn" id="bopen" style="left:780px;top:358.8px;width:117.5px;height:19px;line-height:18.6px;box-shadow:0 0 0 2px #8fbdf3,0 0 1px 2.5px #a8ccf5">Open Tune</div>
<div class="btn" style="left:913px;top:358.5px;width:117px;height:19.5px;line-height:19px">Save Tune</div>
<div class="btn" style="left:780px;top:386.5px;width:117.5px;height:18.5px;line-height:18px">VE Analyze</div>
<div class="btn" style="left:913px;top:386.5px;width:117px;height:18.5px;line-height:18px">Save Tune As</div>
<div class="a" style="left:1039.5px;top:354.8px;width:132.5px;height:54.7px;border-left:1px solid #9c9c9c;border-top:1px solid #9c9c9c;box-sizing:border-box"></div>
<div class="a" style="left:1040.5px;top:355.8px;width:131.5px;height:26.2px;background:#ededed"></div>
<div class="a" style="left:1040px;top:381.9px;width:132px;height:1px;background:#9c9c9c"></div>
<div class="t" style="left:1038.4px;top:363.5px;width:132px;text-align:center;font-size:12.4px;color:#1a1a1a;-webkit-text-stroke:.2px #1a1a1a">veTable1</div>
<div class="t" style="left:1038.4px;top:391px;width:132px;text-align:center;font-size:12.4px;color:#1a1a1a;-webkit-text-stroke:.2px #1a1a1a">afrTable1</div>
<div class="t" id="tafr" style="left:783px;top:414.8px;font-size:11.5px;color:#1a1a1a;-webkit-text-stroke:.15px #1a1a1a">afrTable1</div>
<div class="tb" style="left:885.2px;top:415.1px;width:20.2px;height:20.2px"></div>
<div class="tb" style="left:908.7px;top:415.1px;width:20.2px;height:20.2px"></div>
<div class="tb" style="left:932.1px;top:415.1px;width:20.2px;height:20.2px"></div>
<div class="tb" style="left:955.6px;top:415.1px;width:20.2px;height:20.2px"></div>
<div class="tb" style="left:979.0px;top:415.1px;width:20.2px;height:20.2px"></div>
<div class="tb" style="left:1002.5px;top:415.1px;width:20.2px;height:20.2px"></div>
<div class="tb" style="left:1025.9px;top:415.1px;width:20.2px;height:20.2px"></div>
<div class="tb" style="left:1049.4px;top:415.1px;width:20.2px;height:20.2px"></div>
<div class="tb" style="left:1072.8px;top:415.1px;width:20.2px;height:20.2px"></div>
<div class="tb" style="left:1096.2px;top:415.1px;width:20.2px;height:20.2px"></div>
<div class="tb" style="left:1119.7px;top:415.1px;width:20.2px;height:20.2px"></div>
<div class="tb" style="left:1143.2px;top:415.1px;width:20.2px;height:20.2px"></div>
<svg class="a" style="left:885.2px;top:415.1px" width="279" height="20.2" viewBox="0 0 279 20.2">
<defs><radialGradient id="gg" cx=".4" cy=".35" r=".7"><stop offset="0" stop-color="#a6ec6a"/><stop offset=".6" stop-color="#62c436"/><stop offset="1" stop-color="#3f9c22"/></radialGradient><linearGradient id="gd" x1="0" y1="1" x2="1" y2="0"><stop offset="0" stop-color="#f01010"/><stop offset=".45" stop-color="#d01040"/><stop offset=".6" stop-color="#2020e0"/><stop offset="1" stop-color="#1020f0"/></linearGradient><linearGradient id="gh" x1="0" y1="0" x2="1" y2="0"><stop offset="0" stop-color="#f00010"/><stop offset="1" stop-color="#1020e0"/></linearGradient><linearGradient id="gv" x1="0" y1="0" x2="0" y2="1"><stop offset="0" stop-color="#f00010"/><stop offset="1" stop-color="#1020e0"/></linearGradient><linearGradient id="gr" x1="0" y1="0" x2="1" y2="0"><stop offset="0" stop-color="#ff3050"/><stop offset=".25" stop-color="#ff50e0"/><stop offset=".5" stop-color="#4070ff"/><stop offset="1" stop-color="#00e8f0"/></linearGradient></defs>
<circle cx="10.1" cy="10.1" r="6.859999999999999" fill="url(#gg)" stroke="#55b030" stroke-width="0.6859999999999999"/><path d="M4.612 11.57A6.076 6.076 0 0 1 11.57 4.318A7.4479999999999995 7.4479999999999995 0 0 0 4.612 11.57Z" fill="#c4f59a" opacity=".8"/><path d="M0 -5.4879999999999995L4.9 -0.49H2.156V4.8020000000000005H-2.156V-0.49H-4.9Z" fill="#fff" transform="translate(10.1 10.1) rotate(-18)"/>
<circle cx="33.55" cy="10.1" r="6.859999999999999" fill="url(#gg)" stroke="#55b030" stroke-width="0.6859999999999999"/><path d="M28.061999999999998 11.57A6.076 6.076 0 0 1 35.019999999999996 4.318A7.4479999999999995 7.4479999999999995 0 0 0 28.061999999999998 11.57Z" fill="#c4f59a" opacity=".8"/><path d="M0 -5.4879999999999995L4.9 -0.49H2.156V4.8020000000000005H-2.156V-0.49H-4.9Z" fill="#fff" transform="translate(33.55 10.1) rotate(180) rotate(-14)"/>
<circle cx="57.0" cy="10.1" r="7.202999999999999" fill="#000"/><path d="M53.276 8.434h7.4479999999999995M53.276 11.766h7.4479999999999995" stroke="#fff" stroke-width="1.96"/>
<rect x="73.19800000000001" y="2.848" width="14.504" height="14.504" rx="1.274" fill="#000"/><path d="M80.45 15.0V5.984M75.94200000000001 9.904L80.45 5.396L84.958 9.904" stroke="#fff" stroke-width="1.96" fill="none"/>
<rect x="96.64800000000001" y="2.848" width="14.504" height="14.504" rx="1.274" fill="#000"/><path d="M103.9 5.199999999999999V14.216M99.39200000000001 10.296L103.9 14.803999999999998L108.408 10.296" stroke="#fff" stroke-width="1.96" fill="none"/>
<circle cx="127.35" cy="10.1" r="7.202999999999999" fill="#000"/><path d="M122.744 10.1h9.212" stroke="#fff" stroke-width="2.842"/>
<circle cx="150.8" cy="10.1" r="7.202999999999999" fill="#000"/><path d="M146.39000000000001 10.1h8.82M150.8 5.6899999999999995v8.82" stroke="#fff" stroke-width="2.548"/>
<circle cx="174.25" cy="10.1" r="7.202999999999999" fill="#000"/><path d="M170.428 6.278l7.644 7.644M178.072 6.278l-7.644 7.644" stroke="#fff" stroke-width="2.254"/>
<path d="M194.07399999999998 13.334L201.522 6.866" stroke="url(#gd)" stroke-width="2.45" stroke-linecap="round"/>
<rect x="213.702" y="3.142" width="14.895999999999999" height="3.136" fill="url(#gh)"/><rect x="213.702" y="8.532" width="14.895999999999999" height="3.136" fill="url(#gh)"/><rect x="213.702" y="13.921999999999999" width="14.895999999999999" height="3.136" fill="url(#gh)"/>
<rect x="237.544" y="2.9459999999999997" width="3.332" height="14.308" fill="url(#gv)"/><rect x="242.934" y="2.9459999999999997" width="3.332" height="14.308" fill="url(#gv)"/><rect x="248.32399999999998" y="2.9459999999999997" width="3.332" height="14.308" fill="url(#gv)"/>
<rect x="261.68" y="4.024" width="12.74" height="12.152" fill="url(#gr)"/>
</svg>
<div class="a" style="left:778px;top:438px;width:390px;height:216px;background:#fff"></div>
<div class="a" style="left:773px;top:628.3px;width:399px;height:27px;background:#f0f0f0"></div>
<div class="hc" style="left:779px;top:439.30px;width:27.5px;height:14.2px;font-size:9.5px;line-height:16.6px;overflow:hidden">100</div>
<div class="cell" style="left:809.0px;top:438.80px;width:29.0px;height:15px;overflow:hidden;background:#889fe2;font-size:9.3px;line-height:15.8px;-webkit-text-stroke:.2px #111">12.8</div>
<div class="cell" style="left:838.9px;top:438.80px;width:29.0px;height:15px;overflow:hidden;background:#889fe2;font-size:9.3px;line-height:15.8px;-webkit-text-stroke:.2px #111">12.8</div>
<div class="cell" style="left:868.8px;top:438.80px;width:29.0px;height:15px;overflow:hidden;background:#889fe2;font-size:9.3px;line-height:15.8px;-webkit-text-stroke:.2px #111">12.8</div>
<div class="cell" style="left:898.7px;top:438.80px;width:29.0px;height:15px;overflow:hidden;background:#889fe2;font-size:9.3px;line-height:15.8px;-webkit-text-stroke:.2px #111">12.8</div>
<div class="cell" style="left:928.6px;top:438.80px;width:29.0px;height:15px;overflow:hidden;background:#8897ec;font-size:9.3px;line-height:15.8px;-webkit-text-stroke:.2px #111">12.7</div>
<div class="cell" style="left:958.5px;top:438.80px;width:29.0px;height:15px;overflow:hidden;background:#8890f5;font-size:9.3px;line-height:15.8px;-webkit-text-stroke:.2px #111">12.6</div>
<div class="cell" style="left:988.4px;top:438.80px;width:29.0px;height:15px;overflow:hidden;background:#8888ff;font-size:9.3px;line-height:15.8px;-webkit-text-stroke:.2px #111">12.5</div>
<div class="cell" style="left:1018.3px;top:438.80px;width:29.0px;height:15px;overflow:hidden;background:#8888ff;font-size:9.3px;line-height:15.8px;-webkit-text-stroke:.2px #111">12.5</div>
<div class="cell" style="left:1048.2px;top:438.80px;width:29.0px;height:15px;overflow:hidden;background:#8888ff;font-size:9.3px;line-height:15.8px;-webkit-text-stroke:.2px #111">12.5</div>
<div class="cell" style="left:1078.1px;top:438.80px;width:29.0px;height:15px;overflow:hidden;background:#8888ff;font-size:9.3px;line-height:15.8px;-webkit-text-stroke:.2px #111">12.5</div>
<div class="cell" style="left:1108.0px;top:438.80px;width:29.0px;height:15px;overflow:hidden;background:#8888ff;font-size:9.3px;line-height:15.8px;-webkit-text-stroke:.2px #111">12.5</div>
<div class="cell" style="left:1137.9px;top:438.80px;width:29.0px;height:15px;overflow:hidden;background:#8888ff;font-size:9.3px;line-height:15.8px;-webkit-text-stroke:.2px #111">12.5</div>
<div class="hc" style="left:779px;top:455.22px;width:27.5px;height:14.2px;font-size:9.5px;line-height:16.6px;overflow:hidden">95</div>
<div class="cell" style="left:809.0px;top:454.72px;width:29.0px;height:15px;overflow:hidden;background:#88b6c6;font-size:9.3px;line-height:15.8px;-webkit-text-stroke:.2px #111">13.1</div>
<div class="cell" style="left:838.9px;top:454.72px;width:29.0px;height:15px;overflow:hidden;background:#88b6c6;font-size:9.3px;line-height:15.8px;-webkit-text-stroke:.2px #111">13.1</div>
<div class="cell" style="left:868.8px;top:454.72px;width:29.0px;height:15px;overflow:hidden;background:#889fe2;font-size:9.3px;line-height:15.8px;-webkit-text-stroke:.2px #111">12.8</div>
<div class="cell" style="left:898.7px;top:454.72px;width:29.0px;height:15px;overflow:hidden;background:#889fe2;font-size:9.3px;line-height:15.8px;-webkit-text-stroke:.2px #111">12.8</div>
<div class="cell" style="left:928.6px;top:454.72px;width:29.0px;height:15px;overflow:hidden;background:#889fe2;font-size:9.3px;line-height:15.8px;-webkit-text-stroke:.2px #111">12.8</div>
<div class="cell" style="left:958.5px;top:454.72px;width:29.0px;height:15px;overflow:hidden;background:#8897ec;font-size:9.3px;line-height:15.8px;-webkit-text-stroke:.2px #111">12.7</div>
<div class="cell" style="left:988.4px;top:454.72px;width:29.0px;height:15px;overflow:hidden;background:#8890f5;font-size:9.3px;line-height:15.8px;-webkit-text-stroke:.2px #111">12.6</div>
<div class="cell" style="left:1018.3px;top:454.72px;width:29.0px;height:15px;overflow:hidden;background:#8890f5;font-size:9.3px;line-height:15.8px;-webkit-text-stroke:.2px #111">12.6</div>
<div class="cell" style="left:1048.2px;top:454.72px;width:29.0px;height:15px;overflow:hidden;background:#8890f5;font-size:9.3px;line-height:15.8px;-webkit-text-stroke:.2px #111">12.6</div>
<div class="cell" style="left:1078.1px;top:454.72px;width:29.0px;height:15px;overflow:hidden;background:#8890f5;font-size:9.3px;line-height:15.8px;-webkit-text-stroke:.2px #111">12.6</div>
<div class="cell" style="left:1108.0px;top:454.72px;width:29.0px;height:15px;overflow:hidden;background:#8890f5;font-size:9.3px;line-height:15.8px;-webkit-text-stroke:.2px #111">12.6</div>
<div class="cell" style="left:1137.9px;top:454.72px;width:29.0px;height:15px;overflow:hidden;background:#8890f5;font-size:9.3px;line-height:15.8px;-webkit-text-stroke:.2px #111">12.6</div>
<div class="hc" style="left:779px;top:471.14px;width:27.5px;height:14.2px;font-size:9.5px;line-height:16.6px;overflow:hidden">85</div>
<div class="cell" style="left:809.0px;top:470.64px;width:29.0px;height:15px;overflow:hidden;background:#88e48d;font-size:9.3px;line-height:15.8px;-webkit-text-stroke:.2px #111">13.7</div>
<div class="cell" style="left:838.9px;top:470.64px;width:29.0px;height:15px;overflow:hidden;background:#88e48d;font-size:9.3px;line-height:15.8px;-webkit-text-stroke:.2px #111">13.7</div>
<div class="cell" style="left:868.8px;top:470.64px;width:29.0px;height:15px;overflow:hidden;background:#88a7d9;font-size:9.3px;line-height:15.8px;-webkit-text-stroke:.2px #111">12.9</div>
<div class="cell" style="left:898.7px;top:470.64px;width:29.0px;height:15px;overflow:hidden;background:#88a7d9;font-size:9.3px;line-height:15.8px;-webkit-text-stroke:.2px #111">12.9</div>
<div class="cell" style="left:928.6px;top:470.64px;width:29.0px;height:15px;overflow:hidden;background:#88a7d9;font-size:9.3px;line-height:15.8px;-webkit-text-stroke:.2px #111">12.9</div>
<div class="cell" style="left:958.5px;top:470.64px;width:29.0px;height:15px;overflow:hidden;background:#88a7d9;font-size:9.3px;line-height:15.8px;-webkit-text-stroke:.2px #111">12.9</div>
<div class="cell" style="left:988.4px;top:470.64px;width:29.0px;height:15px;overflow:hidden;background:#88a7d9;font-size:9.3px;line-height:15.8px;-webkit-text-stroke:.2px #111">12.9</div>
<div class="cell" style="left:1018.3px;top:470.64px;width:29.0px;height:15px;overflow:hidden;background:#889fe2;font-size:9.3px;line-height:15.8px;-webkit-text-stroke:.2px #111">12.8</div>
<div class="cell" style="left:1048.2px;top:470.64px;width:29.0px;height:15px;overflow:hidden;background:#889fe2;font-size:9.3px;line-height:15.8px;-webkit-text-stroke:.2px #111">12.8</div>
<div class="cell" style="left:1078.1px;top:470.64px;width:29.0px;height:15px;overflow:hidden;background:#889fe2;font-size:9.3px;line-height:15.8px;-webkit-text-stroke:.2px #111">12.8</div>
<div class="cell" style="left:1108.0px;top:470.64px;width:29.0px;height:15px;overflow:hidden;background:#889fe2;font-size:9.3px;line-height:15.8px;-webkit-text-stroke:.2px #111">12.8</div>
<div class="cell" style="left:1137.9px;top:470.64px;width:29.0px;height:15px;overflow:hidden;background:#889fe2;font-size:9.3px;line-height:15.8px;-webkit-text-stroke:.2px #111">12.8</div>
<div class="hc" style="left:779px;top:487.06px;width:27.5px;height:14.2px;font-size:9.5px;line-height:16.6px;overflow:hidden">75</div>
<div class="cell" style="left:809.0px;top:486.56px;width:29.0px;height:15px;overflow:hidden;background:#9ed688;font-size:9.3px;line-height:15.8px;-webkit-text-stroke:.2px #111">14.0</div>
<div class="cell" style="left:838.9px;top:486.56px;width:29.0px;height:15px;overflow:hidden;background:#9ed688;font-size:9.3px;line-height:15.8px;-webkit-text-stroke:.2px #111">14.0</div>
<div class="cell" style="left:868.8px;top:486.56px;width:29.0px;height:15px;overflow:hidden;background:#88e48d;font-size:9.3px;line-height:15.8px;-webkit-text-stroke:.2px #111">13.7</div>
<div class="cell" style="left:898.7px;top:486.56px;width:29.0px;height:15px;overflow:hidden;background:#88cda9;font-size:9.3px;line-height:15.8px;-webkit-text-stroke:.2px #111">13.4</div>
<div class="cell" style="left:928.6px;top:486.56px;width:29.0px;height:15px;overflow:hidden;background:#88cda9;font-size:9.3px;line-height:15.8px;-webkit-text-stroke:.2px #111">13.4</div>
<div class="cell" style="left:958.5px;top:486.56px;width:29.0px;height:15px;overflow:hidden;background:#88cda9;font-size:9.3px;line-height:15.8px;-webkit-text-stroke:.2px #111">13.4</div>
<div class="cell" style="left:988.4px;top:486.56px;width:29.0px;height:15px;overflow:hidden;background:#88bebc;font-size:9.3px;line-height:15.8px;-webkit-text-stroke:.2px #111">13.2</div>
<div class="cell" style="left:1018.3px;top:486.56px;width:29.0px;height:15px;overflow:hidden;background:#88b6c6;font-size:9.3px;line-height:15.8px;-webkit-text-stroke:.2px #111">13.1</div>
<div class="cell" style="left:1048.2px;top:486.56px;width:29.0px;height:15px;overflow:hidden;background:#88aecf;font-size:9.3px;line-height:15.8px;-webkit-text-stroke:.2px #111">13.0</div>
<div class="cell" style="left:1078.1px;top:486.56px;width:29.0px;height:15px;overflow:hidden;background:#88a7d9;font-size:9.3px;line-height:15.8px;-webkit-text-stroke:.2px #111">12.9</div>
<div class="cell" style="left:1108.0px;top:486.56px;width:29.0px;height:15px;overflow:hidden;background:#889fe2;font-size:9.3px;line-height:15.8px;-webkit-text-stroke:.2px #111">12.8</div>
<div class="cell" style="left:1137.9px;top:486.56px;width:29.0px;height:15px;overflow:hidden;background:#889fe2;font-size:9.3px;line-height:15.8px;-webkit-text-stroke:.2px #111">12.8</div>
<div class="hc" style="left:779px;top:502.98px;width:27.5px;height:14.2px;font-size:9.5px;line-height:16.6px;overflow:hidden">65</div>
<div class="cell" style="left:809.0px;top:502.48px;width:29.0px;height:15px;overflow:hidden;background:#a7cf88;font-size:9.3px;line-height:15.8px;-webkit-text-stroke:.2px #111">14.1</div>
<div class="cell" style="left:838.9px;top:502.48px;width:29.0px;height:15px;overflow:hidden;background:#b0c888;font-size:9.3px;line-height:15.8px;-webkit-text-stroke:.2px #111">14.2</div>
<div class="cell" style="left:868.8px;top:502.48px;width:29.0px;height:15px;overflow:hidden;background:#b8c188;font-size:9.3px;line-height:15.8px;-webkit-text-stroke:.2px #111">14.3</div>
<div class="cell" style="left:898.7px;top:502.48px;width:29.0px;height:15px;overflow:hidden;background:#a7cf88;font-size:9.3px;line-height:15.8px;-webkit-text-stroke:.2px #111">14.1</div>
<div class="cell" style="left:928.6px;top:502.48px;width:29.0px;height:15px;overflow:hidden;background:#9ed688;font-size:9.3px;line-height:15.8px;-webkit-text-stroke:.2px #111">14.0</div>
<div class="cell" style="left:958.5px;top:502.48px;width:29.0px;height:15px;overflow:hidden;background:#95dd88;font-size:9.3px;line-height:15.8px;-webkit-text-stroke:.2px #111">13.9</div>
<div class="cell" style="left:988.4px;top:502.48px;width:29.0px;height:15px;overflow:hidden;background:#88e48d;font-size:9.3px;line-height:15.8px;-webkit-text-stroke:.2px #111">13.7</div>
<div class="cell" style="left:1018.3px;top:502.48px;width:29.0px;height:15px;overflow:hidden;background:#88d5a0;font-size:9.3px;line-height:15.8px;-webkit-text-stroke:.2px #111">13.5</div>
<div class="cell" style="left:1048.2px;top:502.48px;width:29.0px;height:15px;overflow:hidden;background:#88bebc;font-size:9.3px;line-height:15.8px;-webkit-text-stroke:.2px #111">13.2</div>
<div class="cell" style="left:1078.1px;top:502.48px;width:29.0px;height:15px;overflow:hidden;background:#88aecf;font-size:9.3px;line-height:15.8px;-webkit-text-stroke:.2px #111">13.0</div>
<div class="cell" style="left:1108.0px;top:502.48px;width:29.0px;height:15px;overflow:hidden;background:#88a7d9;font-size:9.3px;line-height:15.8px;-webkit-text-stroke:.2px #111">12.9</div>
<div class="cell" style="left:1137.9px;top:502.48px;width:29.0px;height:15px;overflow:hidden;background:#88a7d9;font-size:9.3px;line-height:15.8px;-webkit-text-stroke:.2px #111">12.9</div>
<div class="hc" style="left:779px;top:518.90px;width:27.5px;height:14.2px;font-size:9.5px;line-height:16.6px;overflow:hidden">55</div>
<div class="cell" style="left:809.0px;top:518.40px;width:29.0px;height:15px;overflow:hidden;background:#b0c888;font-size:9.3px;line-height:15.8px;-webkit-text-stroke:.2px #111">14.2</div>
<div class="cell" style="left:838.9px;top:518.40px;width:29.0px;height:15px;overflow:hidden;background:#b0c888;font-size:9.3px;line-height:15.8px;-webkit-text-stroke:.2px #111">14.2</div>
<div class="cell" style="left:868.8px;top:518.40px;width:29.0px;height:15px;overflow:hidden;background:#dca488;font-size:9.3px;line-height:15.8px;-webkit-text-stroke:.2px #111">14.7</div>
<div class="cell" style="left:898.7px;top:518.40px;width:29.0px;height:15px;overflow:hidden;background:#dca488;font-size:9.3px;line-height:15.8px;-webkit-text-stroke:.2px #111">14.7</div>
<div class="cell" style="left:928.6px;top:518.40px;width:29.0px;height:15px;overflow:hidden;background:#dca488;font-size:9.3px;line-height:15.8px;-webkit-text-stroke:.2px #111">14.7</div>
<div class="cell" style="left:958.5px;top:518.40px;width:29.0px;height:15px;overflow:hidden;background:#dca488;font-size:9.3px;line-height:15.8px;-webkit-text-stroke:.2px #111">14.7</div>
<div class="cell" style="left:988.4px;top:518.40px;width:29.0px;height:15px;overflow:hidden;background:#cab388;font-size:9.3px;line-height:15.8px;-webkit-text-stroke:.2px #111">14.5</div>
<div class="cell" style="left:1018.3px;top:518.40px;width:29.0px;height:15px;overflow:hidden;background:#b0c888;font-size:9.3px;line-height:15.8px;-webkit-text-stroke:.2px #111">14.2</div>
<div class="cell" style="left:1048.2px;top:518.40px;width:29.0px;height:15px;overflow:hidden;background:#88e48d;font-size:9.3px;line-height:15.8px;-webkit-text-stroke:.2px #111">13.7</div>
<div class="cell" style="left:1078.1px;top:518.40px;width:29.0px;height:15px;overflow:hidden;background:#88dc96;font-size:9.3px;line-height:15.8px;-webkit-text-stroke:.2px #111">13.6</div>
<div class="cell" style="left:1108.0px;top:518.40px;width:29.0px;height:15px;overflow:hidden;background:#88cda9;font-size:9.3px;line-height:15.8px;-webkit-text-stroke:.2px #111">13.4</div>
<div class="cell" style="left:1137.9px;top:518.40px;width:29.0px;height:15px;overflow:hidden;background:#88b6c6;font-size:9.3px;line-height:15.8px;-webkit-text-stroke:.2px #111">13.1</div>
<div class="hc" style="left:779px;top:534.82px;width:27.5px;height:14.2px;font-size:9.5px;line-height:16.6px;overflow:hidden">45</div>
<div class="cell" style="left:809.0px;top:534.32px;width:29.0px;height:15px;overflow:hidden;background:#dca488;font-size:9.3px;line-height:15.8px;-webkit-text-stroke:.2px #111">14.7</div>
<div class="cell" style="left:838.9px;top:534.32px;width:29.0px;height:15px;overflow:hidden;background:#dca488;font-size:9.3px;line-height:15.8px;-webkit-text-stroke:.2px #111">14.7</div>
<div class="cell" style="left:868.8px;top:534.32px;width:29.0px;height:15px;overflow:hidden;background:#dca488;font-size:9.3px;line-height:15.8px;-webkit-text-stroke:.2px #111">14.7</div>
<div class="cell" style="left:898.7px;top:534.32px;width:29.0px;height:15px;overflow:hidden;background:#e59d88;font-size:9.3px;line-height:15.8px;-webkit-text-stroke:.2px #111">14.8</div>
<div class="cell" style="left:928.6px;top:534.32px;width:29.0px;height:15px;overflow:hidden;background:#ed9688;font-size:9.3px;line-height:15.8px;-webkit-text-stroke:.2px #111">14.9</div>
<div class="cell" style="left:958.5px;top:534.32px;width:29.0px;height:15px;overflow:hidden;background:#ed9688;font-size:9.3px;line-height:15.8px;-webkit-text-stroke:.2px #111">14.9</div>
<div class="cell" style="left:988.4px;top:534.32px;width:29.0px;height:15px;overflow:hidden;background:#dca488;font-size:9.3px;line-height:15.8px;-webkit-text-stroke:.2px #111">14.7</div>
<div class="cell" style="left:1018.3px;top:534.32px;width:29.0px;height:15px;overflow:hidden;background:#dca488;font-size:9.3px;line-height:15.8px;-webkit-text-stroke:.2px #111">14.7</div>
<div class="cell" style="left:1048.2px;top:534.32px;width:29.0px;height:15px;overflow:hidden;background:#c1ba88;font-size:9.3px;line-height:15.8px;-webkit-text-stroke:.2px #111">14.4</div>
<div class="cell" style="left:1078.1px;top:534.32px;width:29.0px;height:15px;overflow:hidden;background:#9ed688;font-size:9.3px;line-height:15.8px;-webkit-text-stroke:.2px #111">14.0</div>
<div class="cell" style="left:1108.0px;top:534.32px;width:29.0px;height:15px;overflow:hidden;background:#8ce488;font-size:9.3px;line-height:15.8px;-webkit-text-stroke:.2px #111">13.8</div>
<div class="cell" style="left:1137.9px;top:534.32px;width:29.0px;height:15px;overflow:hidden;background:#88d5a0;font-size:9.3px;line-height:15.8px;-webkit-text-stroke:.2px #111">13.5</div>
<div class="hc" style="left:779px;top:550.74px;width:27.5px;height:14.2px;font-size:9.5px;line-height:16.6px;overflow:hidden">40</div>
<div class="cell" style="left:809.0px;top:550.24px;width:29.0px;height:15px;overflow:hidden;background:#dca488;font-size:9.3px;line-height:15.8px;-webkit-text-stroke:.2px #111">14.7</div>
<div class="cell" style="left:838.9px;top:550.24px;width:29.0px;height:15px;overflow:hidden;background:#dca488;font-size:9.3px;line-height:15.8px;-webkit-text-stroke:.2px #111">14.7</div>
<div class="cell" style="left:868.8px;top:550.24px;width:29.0px;height:15px;overflow:hidden;background:#dca488;font-size:9.3px;line-height:15.8px;-webkit-text-stroke:.2px #111">14.7</div>
<div class="cell" style="left:898.7px;top:550.24px;width:29.0px;height:15px;overflow:hidden;background:#ed9688;font-size:9.3px;line-height:15.8px;-webkit-text-stroke:.2px #111">14.9</div>
<div class="cell" style="left:928.6px;top:550.24px;width:29.0px;height:15px;overflow:hidden;background:#ed9688;font-size:9.3px;line-height:15.8px;-webkit-text-stroke:.2px #111">14.9</div>
<div class="cell" style="left:958.5px;top:550.24px;width:29.0px;height:15px;overflow:hidden;background:#f68f88;font-size:9.3px;line-height:15.8px;-webkit-text-stroke:.2px #111">15.0</div>
<div class="cell" style="left:988.4px;top:550.24px;width:29.0px;height:15px;overflow:hidden;background:#e59d88;font-size:9.3px;line-height:15.8px;-webkit-text-stroke:.2px #111">14.8</div>
<div class="cell" style="left:1018.3px;top:550.24px;width:29.0px;height:15px;overflow:hidden;background:#dca488;font-size:9.3px;line-height:15.8px;-webkit-text-stroke:.2px #111">14.7</div>
<div class="cell" style="left:1048.2px;top:550.24px;width:29.0px;height:15px;overflow:hidden;background:#cab388;font-size:9.3px;line-height:15.8px;-webkit-text-stroke:.2px #111">14.5</div>
<div class="cell" style="left:1078.1px;top:550.24px;width:29.0px;height:15px;overflow:hidden;background:#b8c188;font-size:9.3px;line-height:15.8px;-webkit-text-stroke:.2px #111">14.3</div>
<div class="cell" style="left:1108.0px;top:550.24px;width:29.0px;height:15px;overflow:hidden;background:#a7cf88;font-size:9.3px;line-height:15.8px;-webkit-text-stroke:.2px #111">14.1</div>
<div class="cell" style="left:1137.9px;top:550.24px;width:29.0px;height:15px;overflow:hidden;background:#9ed688;font-size:9.3px;line-height:15.8px;-webkit-text-stroke:.2px #111">14.0</div>
<div class="hc" style="left:779px;top:566.66px;width:27.5px;height:14.2px;font-size:9.5px;line-height:16.6px;overflow:hidden">35</div>
<div class="cell" style="left:809.0px;top:566.16px;width:29.0px;height:15px;overflow:hidden;background:#dca488;font-size:9.3px;line-height:15.8px;-webkit-text-stroke:.2px #111">14.7</div>
<div class="cell" style="left:838.9px;top:566.16px;width:29.0px;height:15px;overflow:hidden;background:#dca488;font-size:9.3px;line-height:15.8px;-webkit-text-stroke:.2px #111">14.7</div>
<div class="cell" style="left:868.8px;top:566.16px;width:29.0px;height:15px;overflow:hidden;background:#dca488;font-size:9.3px;line-height:15.8px;-webkit-text-stroke:.2px #111">14.7</div>
<div class="cell" style="left:898.7px;top:566.16px;width:29.0px;height:15px;overflow:hidden;background:#f68f88;font-size:9.3px;line-height:15.8px;-webkit-text-stroke:.2px #111">15.0</div>
<div class="cell" style="left:928.6px;top:566.16px;width:29.0px;height:15px;overflow:hidden;background:#f68f88;font-size:9.3px;line-height:15.8px;-webkit-text-stroke:.2px #111">15.0</div>
<div class="cell" style="left:958.5px;top:566.16px;width:29.0px;height:15px;overflow:hidden;background:#f68f88;font-size:9.3px;line-height:15.8px;-webkit-text-stroke:.2px #111">15.0</div>
<div class="cell" style="left:988.4px;top:566.16px;width:29.0px;height:15px;overflow:hidden;background:#ed9688;font-size:9.3px;line-height:15.8px;-webkit-text-stroke:.2px #111">14.9</div>
<div class="cell" style="left:1018.3px;top:566.16px;width:29.0px;height:15px;overflow:hidden;background:#dca488;font-size:9.3px;line-height:15.8px;-webkit-text-stroke:.2px #111">14.7</div>
<div class="cell" style="left:1048.2px;top:566.16px;width:29.0px;height:15px;overflow:hidden;background:#dca488;font-size:9.3px;line-height:15.8px;-webkit-text-stroke:.2px #111">14.7</div>
<div class="cell" style="left:1078.1px;top:566.16px;width:29.0px;height:15px;overflow:hidden;background:#f0d800;font-size:9.3px;line-height:15.8px;-webkit-text-stroke:.2px #111">14.6</div>
<div class="cell" style="left:1108.0px;top:566.16px;width:29.0px;height:15px;overflow:hidden;background:#e8d020;font-size:9.3px;line-height:15.8px;-webkit-text-stroke:.2px #111">14.5</div>
<div class="cell" style="left:1137.9px;top:566.16px;width:29.0px;height:15px;overflow:hidden;background:#c1ba88;font-size:9.3px;line-height:15.8px;-webkit-text-stroke:.2px #111">14.4</div>
<div class="hc" style="left:779px;top:582.58px;width:27.5px;height:14.2px;font-size:9.5px;line-height:16.6px;overflow:hidden">30</div>
<div class="cell" style="left:809.0px;top:582.08px;width:29.0px;height:15px;overflow:hidden;background:#dca488;font-size:9.3px;line-height:15.8px;-webkit-text-stroke:.2px #111">14.7</div>
<div class="cell" style="left:838.9px;top:582.08px;width:29.0px;height:15px;overflow:hidden;background:#dca488;font-size:9.3px;line-height:15.8px;-webkit-text-stroke:.2px #111">14.7</div>
<div class="cell" style="left:868.8px;top:582.08px;width:29.0px;height:15px;overflow:hidden;background:#dca488;font-size:9.3px;line-height:15.8px;-webkit-text-stroke:.2px #111">14.7</div>
<div class="cell" style="left:898.7px;top:582.08px;width:29.0px;height:15px;overflow:hidden;background:#f68f88;font-size:9.3px;line-height:15.8px;-webkit-text-stroke:.2px #111">15.0</div>
<div class="cell" style="left:928.6px;top:582.08px;width:29.0px;height:15px;overflow:hidden;background:#ff8888;font-size:9.3px;line-height:15.8px;-webkit-text-stroke:.2px #111">15.1</div>
<div class="cell" style="left:958.5px;top:582.08px;width:29.0px;height:15px;overflow:hidden;background:#ff8888;font-size:9.3px;line-height:15.8px;-webkit-text-stroke:.2px #111">15.1</div>
<div class="cell" style="left:988.4px;top:582.08px;width:29.0px;height:15px;overflow:hidden;background:#f68f88;font-size:9.3px;line-height:15.8px;-webkit-text-stroke:.2px #111">15.0</div>
<div class="cell" style="left:1018.3px;top:582.08px;width:29.0px;height:15px;overflow:hidden;background:#dca488;font-size:9.3px;line-height:15.8px;-webkit-text-stroke:.2px #111">14.7</div>
<div class="cell" style="left:1048.2px;top:582.08px;width:29.0px;height:15px;overflow:hidden;background:#dca488;font-size:9.3px;line-height:15.8px;-webkit-text-stroke:.2px #111">14.7</div>
<div class="cell" style="left:1078.1px;top:582.08px;width:29.0px;height:15px;overflow:hidden;background:#e8b820;font-size:9.3px;line-height:15.8px;-webkit-text-stroke:.2px #111">14.7</div>
<div class="cell" style="left:1108.0px;top:582.08px;width:29.0px;height:15px;overflow:hidden;background:#e6b828;font-size:9.3px;line-height:15.8px;-webkit-text-stroke:.2px #111">14.7</div>
<div class="cell" style="left:1137.9px;top:582.08px;width:29.0px;height:15px;overflow:hidden;background:#dca488;font-size:9.3px;line-height:15.8px;-webkit-text-stroke:.2px #111">14.7</div>
<div class="hc" style="left:779px;top:598.50px;width:27.5px;height:14.2px;font-size:9.5px;line-height:16.6px;overflow:hidden">25</div>
<div class="cell" style="left:809.0px;top:598.00px;width:29.0px;height:15px;overflow:hidden;background:#dca488;font-size:9.3px;line-height:15.8px;-webkit-text-stroke:.2px #111">14.7</div>
<div class="cell" style="left:838.9px;top:598.00px;width:29.0px;height:15px;overflow:hidden;background:#dca488;font-size:9.3px;line-height:15.8px;-webkit-text-stroke:.2px #111">14.7</div>
<div class="cell" style="left:868.8px;top:598.00px;width:29.0px;height:15px;overflow:hidden;background:#dca488;font-size:9.3px;line-height:15.8px;-webkit-text-stroke:.2px #111">14.7</div>
<div class="cell" style="left:898.7px;top:598.00px;width:29.0px;height:15px;overflow:hidden;background:#f68f88;font-size:9.3px;line-height:15.8px;-webkit-text-stroke:.2px #111">15.0</div>
<div class="cell" style="left:928.6px;top:598.00px;width:29.0px;height:15px;overflow:hidden;background:#ff8888;font-size:9.3px;line-height:15.8px;-webkit-text-stroke:.2px #111">15.1</div>
<div class="cell" style="left:958.5px;top:598.00px;width:29.0px;height:15px;overflow:hidden;background:#ff8888;font-size:9.3px;line-height:15.8px;-webkit-text-stroke:.2px #111">15.1</div>
<div class="cell" style="left:988.4px;top:598.00px;width:29.0px;height:15px;overflow:hidden;background:#f68f88;font-size:9.3px;line-height:15.8px;-webkit-text-stroke:.2px #111">15.0</div>
<div class="cell" style="left:1018.3px;top:598.00px;width:29.0px;height:15px;overflow:hidden;background:#dca488;font-size:9.3px;line-height:15.8px;-webkit-text-stroke:.2px #111">14.7</div>
<div class="cell" style="left:1048.2px;top:598.00px;width:29.0px;height:15px;overflow:hidden;background:#dca488;font-size:9.3px;line-height:15.8px;-webkit-text-stroke:.2px #111">14.7</div>
<div class="cell" style="left:1078.1px;top:598.00px;width:29.0px;height:15px;overflow:hidden;background:#dca488;font-size:9.3px;line-height:15.8px;-webkit-text-stroke:.2px #111">14.7</div>
<div class="cell" style="left:1108.0px;top:598.00px;width:29.0px;height:15px;overflow:hidden;background:#dca488;font-size:9.3px;line-height:15.8px;-webkit-text-stroke:.2px #111">14.7</div>
<div class="cell" style="left:1137.9px;top:598.00px;width:29.0px;height:15px;overflow:hidden;background:#dca488;font-size:9.3px;line-height:15.8px;-webkit-text-stroke:.2px #111">14.7</div>
<div class="hc" style="left:779px;top:614.42px;width:27.5px;height:13.2px;font-size:9.5px;line-height:16.6px;overflow:hidden">15</div>
<div class="cell" style="left:809.0px;top:613.92px;width:29.0px;height:13.8px;overflow:hidden;background:#dca488;font-size:9.3px;line-height:15.8px;-webkit-text-stroke:.2px #111">14.7</div>
<div class="cell" style="left:838.9px;top:613.92px;width:29.0px;height:13.8px;overflow:hidden;background:#dca488;font-size:9.3px;line-height:15.8px;-webkit-text-stroke:.2px #111">14.7</div>
<div class="cell" style="left:868.8px;top:613.92px;width:29.0px;height:13.8px;overflow:hidden;background:#dca488;font-size:9.3px;line-height:15.8px;-webkit-text-stroke:.2px #111">14.7</div>
<div class="cell" style="left:898.7px;top:613.92px;width:29.0px;height:13.8px;overflow:hidden;background:#f68f88;font-size:9.3px;line-height:15.8px;-webkit-text-stroke:.2px #111">15.0</div>
<div class="cell" style="left:928.6px;top:613.92px;width:29.0px;height:13.8px;overflow:hidden;background:#ff8888;font-size:9.3px;line-height:15.8px;-webkit-text-stroke:.2px #111">15.1</div>
<div class="cell" style="left:958.5px;top:613.92px;width:29.0px;height:13.8px;overflow:hidden;background:#ff8888;font-size:9.3px;line-height:15.8px;-webkit-text-stroke:.2px #111">15.1</div>
<div class="cell" style="left:988.4px;top:613.92px;width:29.0px;height:13.8px;overflow:hidden;background:#f68f88;font-size:9.3px;line-height:15.8px;-webkit-text-stroke:.2px #111">15.0</div>
<div class="cell" style="left:1018.3px;top:613.92px;width:29.0px;height:13.8px;overflow:hidden;background:#dca488;font-size:9.3px;line-height:15.8px;-webkit-text-stroke:.2px #111">14.7</div>
<div class="cell" style="left:1048.2px;top:613.92px;width:29.0px;height:13.8px;overflow:hidden;background:#dca488;font-size:9.3px;line-height:15.8px;-webkit-text-stroke:.2px #111">14.7</div>
<div class="cell" style="left:1078.1px;top:613.92px;width:29.0px;height:13.8px;overflow:hidden;background:#dca488;font-size:9.3px;line-height:15.8px;-webkit-text-stroke:.2px #111">14.7</div>
<div class="cell" style="left:1108.0px;top:613.92px;width:29.0px;height:13.8px;overflow:hidden;background:#dca488;font-size:9.3px;line-height:15.8px;-webkit-text-stroke:.2px #111">14.7</div>
<div class="cell" style="left:1137.9px;top:613.92px;width:29.0px;height:13.8px;overflow:hidden;background:#dca488;font-size:9.3px;line-height:15.8px;-webkit-text-stroke:.2px #111">14.7</div>
<div class="hc" style="left:810.0px;top:629px;width:28.3px;height:22px;font-size:9.5px;line-height:21.6px">600</div>
<div class="hc" style="left:839.9px;top:629px;width:28.3px;height:22px;font-size:9.5px;line-height:21.6px">1000</div>
<div class="hc" style="left:869.8px;top:629px;width:28.3px;height:22px;font-size:9.5px;line-height:21.6px">1300</div>
<div class="hc" style="left:899.7px;top:629px;width:28.3px;height:22px;font-size:9.5px;line-height:21.6px">1800</div>
<div class="hc" style="left:929.6px;top:629px;width:28.3px;height:22px;font-size:9.5px;line-height:21.6px">2300</div>
<div class="hc" style="left:959.5px;top:629px;width:28.3px;height:22px;font-size:9.5px;line-height:21.6px">2800</div>
<div class="hc" style="left:989.4px;top:629px;width:28.3px;height:22px;font-size:9.5px;line-height:21.6px">3300</div>
<div class="hc" style="left:1019.3px;top:629px;width:28.3px;height:22px;font-size:9.5px;line-height:21.6px">3800</div>
<div class="hc" style="left:1049.2px;top:629px;width:28.3px;height:22px;font-size:9.5px;line-height:21.6px">4300</div>
<div class="hc" style="left:1079.1px;top:629px;width:28.3px;height:22px;font-size:9.5px;line-height:21.6px">4800</div>
<div class="hc" style="left:1109.0px;top:629px;width:28.3px;height:22px;font-size:9.5px;line-height:21.6px">5150</div>
<div class="hc" style="left:1138.9px;top:629px;width:28.3px;height:22px;font-size:9.5px;line-height:21.6px">5500</div>
<div class="a" style="left:781px;top:632px;width:23.7px;height:16px;background:#fff;border-radius:4.5px;box-shadow:0 1px 1.5px rgba(0,0,0,.28)"></div><svg class="a" style="left:781px;top:632px;overflow:visible" width="23.7" height="16" viewBox="0 0 23.7 16"><path d="M8.3 2.9V11.3H17.2" fill="none" stroke="#000" stroke-width="2.3"/><path d="M8.3 0.4L11.8 4.3H4.800000000000001Z M19.7 11.3L16.099999999999998 8.0V14.600000000000001Z" fill="#000"/></svg>
<svg class="a" style="left:773px;top:430px" width="399" height="230" viewBox="773 430 399 230">
<polyline points="955.2,531.8 957.4,532.3 961.6,535 966.2,534.9 971.7,536 976.3,536 980.8,538.2 986.3,538 990,532.7 994.7,530.5 998.3,530.5 1001.6,526.3 1004.8,528 1007.5,529 1011.5,528.6 1016.3,525 1020.7,525.7 1025.5,524.4 1029.5,523.5 1033.2,523.1 1035.9,521.7 1039.6,517.6 1045,514.7 1049.7,512.1 1053.7,507 1058.5,507 1063.4,501.5 1068.9,501.5 1074.4,502.8 1078,503.7 1082.3,505.2 1086,506 1090.4,505.2 1095.1,506 1100.5,518.4 1104.3,530.8 1105.6,542.8 1105.8,579" fill="none" stroke="#2a3cf0" stroke-width="1.3"/>
<circle cx="955.2" cy="531.8" r="1.9" fill="#1414ea"/>
<circle cx="957.4" cy="532.3" r="1.9" fill="#1414ea"/>
<circle cx="961.6" cy="535" r="1.9" fill="#1414ea"/>
<circle cx="966.2" cy="534.9" r="1.9" fill="#1414ea"/>
<circle cx="971.7" cy="536" r="1.9" fill="#1414ea"/>
<circle cx="976.3" cy="536" r="1.9" fill="#1414ea"/>
<circle cx="980.8" cy="538.2" r="1.9" fill="#1414ea"/>
<circle cx="986.3" cy="538" r="1.9" fill="#1414ea"/>
<circle cx="990" cy="532.7" r="1.9" fill="#1414ea"/>
<circle cx="994.7" cy="530.5" r="1.9" fill="#1414ea"/>
<circle cx="998.3" cy="530.5" r="1.9" fill="#1414ea"/>
<circle cx="1001.6" cy="526.3" r="1.9" fill="#1414ea"/>
<circle cx="1004.8" cy="528" r="1.9" fill="#1414ea"/>
<circle cx="1007.5" cy="529" r="1.9" fill="#1414ea"/>
<circle cx="1011.5" cy="528.6" r="1.9" fill="#1414ea"/>
<circle cx="1016.3" cy="525" r="1.9" fill="#1414ea"/>
<circle cx="1020.7" cy="525.7" r="1.9" fill="#1414ea"/>
<circle cx="1025.5" cy="524.4" r="1.9" fill="#1414ea"/>
<circle cx="1029.5" cy="523.5" r="1.9" fill="#1414ea"/>
<circle cx="1033.2" cy="523.1" r="1.9" fill="#1414ea"/>
<circle cx="1035.9" cy="521.7" r="1.9" fill="#1414ea"/>
<circle cx="1039.6" cy="517.6" r="1.9" fill="#1414ea"/>
<circle cx="1045" cy="514.7" r="1.9" fill="#1414ea"/>
<circle cx="1049.7" cy="512.1" r="1.9" fill="#1414ea"/>
<circle cx="1053.7" cy="507" r="1.9" fill="#1414ea"/>
<circle cx="1058.5" cy="507" r="1.9" fill="#1414ea"/>
<circle cx="1063.4" cy="501.5" r="1.9" fill="#1414ea"/>
<circle cx="1068.9" cy="501.5" r="1.9" fill="#1414ea"/>
<circle cx="1074.4" cy="502.8" r="1.9" fill="#1414ea"/>
<circle cx="1078" cy="503.7" r="1.9" fill="#1414ea"/>
<circle cx="1082.3" cy="505.2" r="1.9" fill="#1414ea"/>
<circle cx="1086" cy="506" r="1.9" fill="#1414ea"/>
<circle cx="1090.4" cy="505.2" r="1.9" fill="#1414ea"/>
<circle cx="1095.1" cy="506" r="1.9" fill="#1414ea"/>
<circle cx="1100.5" cy="518.4" r="1.9" fill="#1414ea"/>
<circle cx="1104.3" cy="530.8" r="1.9" fill="#1414ea"/>
<circle cx="1105.6" cy="542.8" r="1.9" fill="#1414ea"/>
<ellipse cx="1106" cy="579" rx="11.8" ry="6.3" fill="none" stroke="#1a1ad0" stroke-width="1.4"/>
</svg>
<div class="t" id="tpath" style="right:34px;top:656.4px;font-size:10.2px;color:#1a1a1a;letter-spacing:.2px">/Users/jameswilson/2021-04-22_MAF.msq</div>
<div class="a" style="left:13px;top:686.6px;width:759px;height:1.2px;background:#b4b4b4"></div>
<div class="a" style="left:13px;top:687.8px;width:1176px;height:8.7px;background:#fbfbfb"></div>
<svg class="a" style="left:12px;top:689px" width="22" height="8" viewBox="12 689 22 8"><path d="M13.4 695.2h6.2L16.5 691zM23.5 691.2h6.4L26.7 695.4z" fill="#8e8e8e"/></svg>
<div class="a" style="left:13px;top:696.5px;width:1175.6px;height:20px;border:1px solid #a6a6a6;border-bottom:1.5px solid #b0b0b0;box-sizing:border-box;background:#f0f0f0;overflow:hidden">
<div class="t" id="trec" style="left:0.8px;top:8.7px;font-size:14px;color:#141414;letter-spacing:.13px;-webkit-text-stroke:.3px #141414">Record 17361 of 20184 – Zoom: 2.01x – Play speed: 100.0%</div>
</div>
<div class="a" style="left:0;top:717px;width:1200px;height:33px;background:#ececec"></div>
<div class="a" style="left:10px;top:716.5px;width:1181px;height:1px;background:#d8d8d8"></div>
<div class="st" style="left:719.8px;background:#55ff55;box-shadow:inset 0 1px 0 rgba(0,0,0,.22), inset 1px 0 0 rgba(0,0,0,.1)"><span>Crank: N</span></div>
<div class="st" style="left:776.0px;background:#55ff55;box-shadow:inset 0 1px 0 rgba(0,0,0,.22), inset 1px 0 0 rgba(0,0,0,.1)"><span>ASE: N</span></div>
<div class="st" style="left:832.3px;background:#55ff55;box-shadow:inset 0 1px 0 rgba(0,0,0,.22), inset 1px 0 0 rgba(0,0,0,.1)"><span>Warm: N</span></div>
<div class="st" style="left:888.5px;background:#ff5a5f;box-shadow:inset 0 1px 0 rgba(0,0,0,.22), inset 1px 0 0 rgba(0,0,0,.1)"><span>Run: Y</span></div>
<div class="st" style="left:944.8px;background:#55ff55;box-shadow:inset 0 1px 0 rgba(0,0,0,.22), inset 1px 0 0 rgba(0,0,0,.1)"><span>TP AE: N</span></div>
<div class="st" style="left:1001.0px;background:#ff5a5f;box-shadow:inset 0 1px 0 rgba(0,0,0,.22), inset 1px 0 0 rgba(0,0,0,.1)"><span>TP DE: Y</span></div>
<div class="st" style="left:1057.3px;background:#55ff55;box-shadow:inset 0 1px 0 rgba(0,0,0,.22), inset 1px 0 0 rgba(0,0,0,.1)"><span>MAP AE: N</span></div>
<div class="st" style="left:1113.5px;background:#55ff55;box-shadow:inset 0 1px 0 rgba(0,0,0,.22), inset 1px 0 0 rgba(0,0,0,.1)"><span>MAP DE: N</span></div>
<div class="a" style="left:1174.4px;top:698px;width:13.6px;height:17px;background:#fafafa"></div>
<div class="a" style="left:1177px;top:699.5px;width:7px;height:13px;border-radius:3.5px;background:#c1c1c1"></div>
<div class="a" style="left:1px;top:732px;width:951px;height:16px;border:1px solid #8c8c8c;box-sizing:border-box;background:#f1f1f1;box-shadow:inset 1px 1px 0 #d4d4d4"></div>
<div class="a" style="left:4px;top:736.2px;width:813.4px;height:7.9px;background:#000"></div>
<div class="a" style="left:953.6px;top:730px;width:19.4px;height:20px;background:#e2e2e2"></div>
<div class="a" style="left:975px;top:730px;width:18.6px;height:20px;background:#e2e2e2"></div>
<div class="a" style="left:995.4px;top:730px;width:18.6px;height:20px;background:#e2e2e2"></div>
<div class="a" style="left:1037px;top:730px;width:19.0px;height:20px;background:#e2e2e2"></div>
<div class="a" style="left:1058px;top:730px;width:19.0px;height:20px;background:#e2e2e2"></div>
<div class="a" style="left:1079px;top:730px;width:19.0px;height:20px;background:#e2e2e2"></div>
<div class="a" style="left:1100px;top:730px;width:19.0px;height:20px;background:#e2e2e2"></div>
<div class="a" style="left:1121px;top:730px;width:19.0px;height:20px;background:#e2e2e2"></div>
<div class="a" style="left:1142px;top:730px;width:19.0px;height:20px;background:#e2e2e2"></div>
<div class="a" style="left:1163px;top:730px;width:19.0px;height:20px;background:#e2e2e2"></div>
<div class="a" style="left:1184px;top:730px;width:16.0px;height:20px;background:#e2e2e2"></div>
<svg class="a" style="left:950px;top:728px" width="250" height="22" viewBox="950 728 250 22"><rect x="959.3" y="736.3" width="9.5" height="9.4" fill="#0a0a0a"/><rect x="981.4" y="734.6" width="1.9" height="12.6" fill="#0a0a0a"/><rect x="986.2" y="734.6" width="1.9" height="12.6" fill="#0a0a0a"/><path d="M999.4 734.6L1011.8 740.9L999.4 747.2Z" fill="#0a0a0a"/><circle cx="1047.5" cy="738.8" r="4.1" fill="none" stroke="#0a0a0a" stroke-width="1.1"/><path d="M1044.5 742L1039.9 746.6" stroke="#0a0a0a" stroke-width="1.8" stroke-linecap="round"/><path d="M1045.3 738.8h4.4" stroke="#0a0a0a" stroke-width="1"/><circle cx="1068.5" cy="738.8" r="4.1" fill="none" stroke="#0a0a0a" stroke-width="1.1"/><path d="M1065.5 742L1060.9 746.6" stroke="#0a0a0a" stroke-width="1.8" stroke-linecap="round"/><path d="M1066.3 738.8h4.4M1068.5 736.6v4.4" stroke="#0a0a0a" stroke-width="1"/><rect x="1080.6" y="734.8" width="2.6" height="12.2" fill="#0a0a0a"/><path d="M1093 734.8V747L1083 740.9Z" fill="#0a0a0a"/><path d="M1107.8 735.8V746L1101.3 740.9ZM1114.3 735.8V746L1107.8 740.9Z" fill="#0a0a0a"/><rect x="1121.8" y="740.1" width="13.6" height="1.6" fill="#0a0a0a"/><rect x="1142.5" y="740.1" width="13.8" height="1.6" fill="#0a0a0a"/><rect x="1148.6" y="734" width="1.6" height="13.8" fill="#0a0a0a"/><path d="M1163.8 735.8V746L1170.3 740.9ZM1170.3 735.8V746L1176.8 740.9Z" fill="#0a0a0a"/><rect x="1195" y="734.8" width="2.6" height="12.2" fill="#0a0a0a"/><path d="M1185 734.8V747L1195 740.9Z" fill="#0a0a0a"/></svg>
</div></body></html>
